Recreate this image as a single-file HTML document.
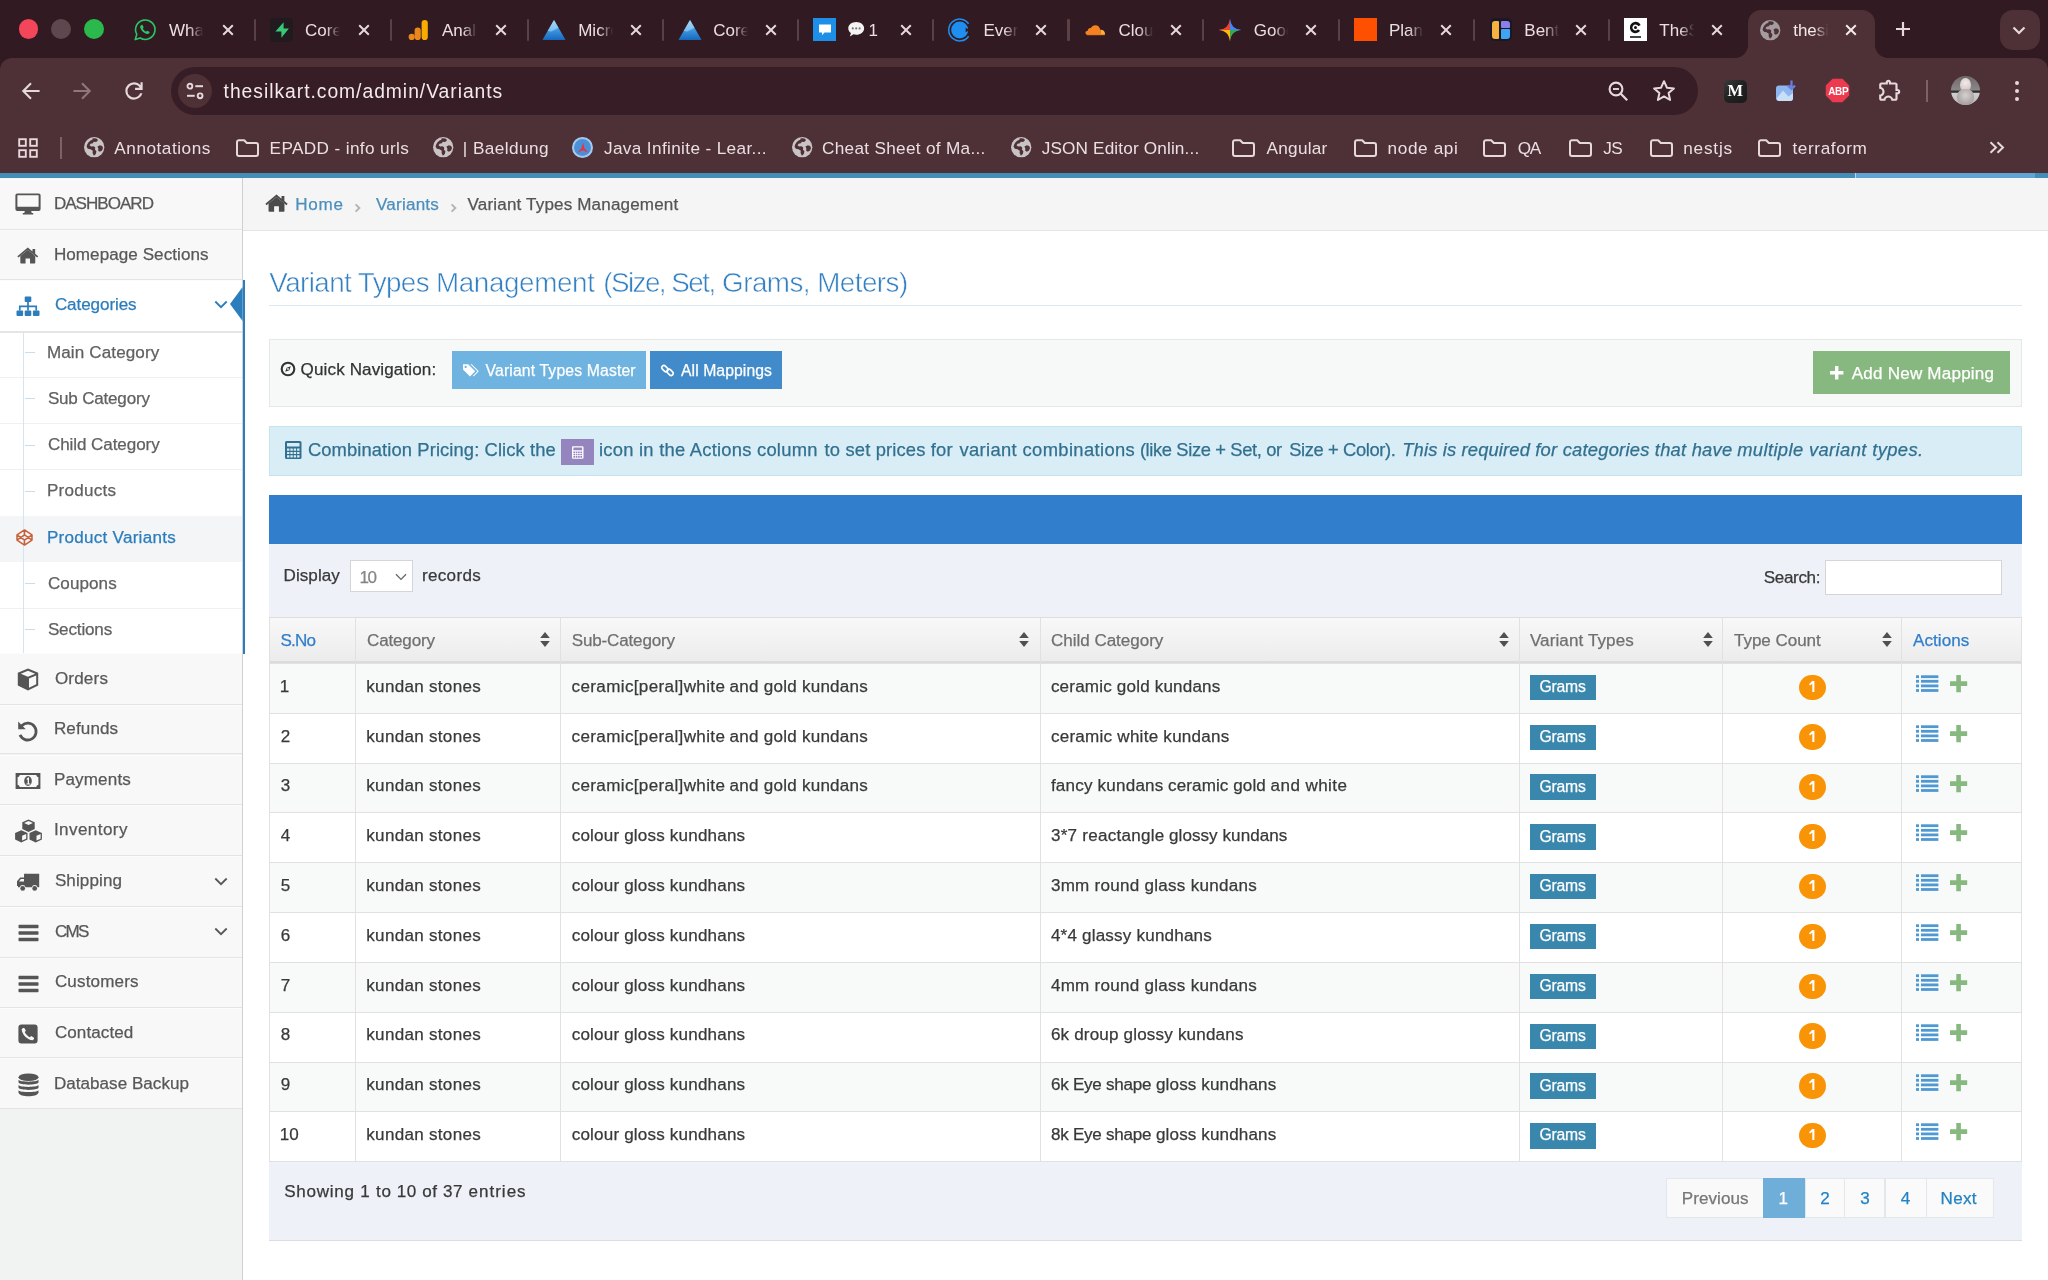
<!DOCTYPE html>
<html lang="en"><head><meta charset="utf-8"><title>thesilkart.com/admin/Variants</title>
<style>
html,body{margin:0;padding:0;}
body{width:2048px;height:1280px;overflow:hidden;position:relative;background:#fff;font-family:"Liberation Sans", sans-serif;}
div,span.t,svg{position:absolute;box-sizing:border-box;}
span.t{white-space:pre;}
#page,#browser-chrome{will-change:transform;}
#page span.t{-webkit-text-stroke:0.250px currentColor;}
svg{overflow:visible;}
</style></head>
<body>
<div id="page" style="left:0;top:0;width:2048px;height:1280px;"><div style="left:243.00px;top:178.00px;width:1805.00px;height:1102.00px;background:#FFFFFF"></div><div style="left:0.00px;top:173.00px;width:2048.00px;height:5.50px;background:#438EB9"></div><div style="left:1855.00px;top:173.00px;width:180.00px;height:5.50px;background:#5FA4D2;border-left:1px solid #B9D6EA"></div><div id="sidebar" style="left:0;top:0;width:0;height:0"><div style="left:0.00px;top:178.00px;width:243.00px;height:1102.00px;background:#F1F2F2;border-right:1px solid #D0D0D0"></div><div style="left:0.00px;top:178.50px;width:242.00px;height:51.10px;background:#F8F8F8;border-top:1px solid #FCFCFC;border-bottom:1px solid #E4E4E4"></div><svg style="left:15.20px;top:193.40px;" width="26.00" height="22.00" viewBox="0 0 26 22"><g fill="#555555"><path d="M2.300 .4 h21.400 a1.900 1.900 0 0 1 1.900 1.900 v13.800 a1.900 1.900 0 0 1-1.900 1.900 h-21.400 a1.900 1.900 0 0 1-1.900-1.900 v-13.800 a1.900 1.900 0 0 1 1.900-1.900z M2.400 2.300 v11.400 h21.200 v-11.400z" fill-rule="evenodd"/><path d="M9.800 18 h6.400 l.5 2 h1.500 v1.500 h-10.400 v-1.500 h1.500z"/></g></svg><span class="t" style="left:53.90px;top:195.00px;font-size:17.06px;line-height:17.06px;color:#585858;letter-spacing:-0.984px;">DASHBOARD</span><div style="left:0.00px;top:229.60px;width:242.00px;height:50.40px;background:#F8F8F8;border-top:1px solid #FCFCFC;border-bottom:1px solid #E4E4E4"></div><svg style="left:17.40px;top:246.60px;" width="21.60" height="18.00" viewBox="0 0 24 20"><g fill="#555555"><path d="M12 3.100 L3.700 10 v7.600 a.8.8 0 0 0 .8.8 h5 v-5.600 h5 v5.600 h5 a.8.8 0 0 0 .8-.8 V10 Z"/><path d="M12 .6 L.4 10.200 l1.200 1.400 L12 3 l10.400 8.600 1.200-1.400 -3.400-2.800 V2.200 h-3 v2.700 Z"/></g></svg><span class="t" style="left:53.90px;top:246.00px;font-size:17.06px;line-height:17.06px;color:#585858;letter-spacing:0.069px;">Homepage Sections</span><div style="left:0.00px;top:280.00px;width:242.00px;height:51.60px;background:#FFFFFF;border-top:1px solid #FCFCFC;border-bottom:1px solid #E4E4E4"></div><svg style="left:16.20px;top:295.70px;" width="24.00" height="21.00" viewBox="0 0 24 21"><g fill="#2B7DBC"><rect x="8.700" y=".5" width="6.600" height="5.600" rx="1"/><rect x=".5" y="14.500" width="6.600" height="5.600" rx="1"/><rect x="8.700" y="14.500" width="6.600" height="5.600" rx="1"/><rect x="16.900" y="14.500" width="6.600" height="5.600" rx="1"/><path d="M12 6 V14.500 M3.800 14.500 V10.300 H20.200 V14.500" fill="none" stroke="#2B7DBC" stroke-width="1.700"/></g></svg><span class="t" style="left:54.90px;top:296.00px;font-size:17.06px;line-height:17.06px;color:#2B7DBC;letter-spacing:-0.079px;">Categories</span><div style="left:0.00px;top:653.40px;width:242.00px;height:51.30px;background:#F8F8F8;border-top:1px solid #FCFCFC;border-bottom:1px solid #E4E4E4"></div><svg style="left:17.20px;top:668.20px;" width="22.00" height="23.00" viewBox="0 0 22 23"><g fill="#555555"><path d="M11 .6 L21.200 4.800 V17.600 L11 22.400 L.8 17.600 V4.800 Z M11 2.800 L3.800 5.700 L11 8.700 L18.200 5.700 Z M12 10.500 V19.700 L19.200 16.300 V7.500 Z" fill-rule="evenodd"/></g></svg><span class="t" style="left:54.90px;top:670.00px;font-size:17.06px;line-height:17.06px;color:#585858;letter-spacing:0.185px;">Orders</span><div style="left:0.00px;top:704.70px;width:242.00px;height:49.80px;background:#F8F8F8;border-top:1px solid #FCFCFC;border-bottom:1px solid #E4E4E4"></div><svg style="left:17.20px;top:719.50px;" width="22.00" height="22.00" viewBox="0 0 22 22"><g fill="#555555"><path d="M1.200 1.600 L1.200 9.200 H8.800 L6 6.400 A7 7 0 1 1 4.300 14.300 L1.700 15.500 A9.800 9.800 0 1 0 4 4.400 Z"/></g></svg><span class="t" style="left:53.90px;top:720.00px;font-size:17.06px;line-height:17.06px;color:#585858;letter-spacing:0.122px;">Refunds</span><div style="left:0.00px;top:754.50px;width:242.00px;height:50.80px;background:#F8F8F8;border-top:1px solid #FCFCFC;border-bottom:1px solid #E4E4E4"></div><svg style="left:15.20px;top:771.90px;" width="26.00" height="18.00" viewBox="0 0 26 18"><g fill="#555555"><path d="M.6 1 H25.400 V17 H.6 Z M4.800 3 A3 3 0 0 1 2.600 5.200 V12.800 A3 3 0 0 1 4.800 15 H21.200 A3 3 0 0 1 23.400 12.800 V5.200 A3 3 0 0 1 21.200 3 Z" fill-rule="evenodd"/><path d="M13 4 a3.800 5 0 1 0 .01 0z M11.600 6.800 l1.400-1.200 h1 v5.800 h1.200 v1.200 h-3.800 v-1.200 h1.300 v-3.800 l-.7.5z" fill-rule="evenodd"/></g></svg><span class="t" style="left:53.90px;top:771.00px;font-size:17.06px;line-height:17.06px;color:#585858;letter-spacing:0.161px;">Payments</span><div style="left:0.00px;top:805.30px;width:242.00px;height:51.10px;background:#F8F8F8;border-top:1px solid #FCFCFC;border-bottom:1px solid #E4E4E4"></div><svg style="left:13.70px;top:819.30px;" width="29.00" height="24.00" viewBox="0 0 29 24"><g fill="#555555"><path d="M14.500 .6 L20.700 3.300 V10 L14.500 12.900 L8.300 10 V3.300 Z M14.500 2.100 L10.100 4 L14.500 5.900 L18.900 4 Z" fill-rule="evenodd"/><path d="M7.300 11.200 L13.500 13.900 V20.600 L7.300 23.500 L1.100 20.600 V13.900 Z M8.100 16.700 V21.600 L12.200 19.700 V14.900 Z" fill-rule="evenodd"/><path d="M21.700 11.200 L27.900 13.900 V20.600 L21.700 23.500 L15.500 20.600 V13.900 Z M22.500 16.700 V21.600 L26.600 19.700 V14.900 Z" fill-rule="evenodd"/></g></svg><span class="t" style="left:53.90px;top:821.00px;font-size:17.06px;line-height:17.06px;color:#585858;letter-spacing:0.426px;">Inventory</span><div style="left:0.00px;top:856.40px;width:242.00px;height:50.60px;background:#F8F8F8;border-top:1px solid #FCFCFC;border-bottom:1px solid #E4E4E4"></div><svg style="left:16.20px;top:872.50px;" width="24.00" height="19.00" viewBox="0 0 24 19"><g fill="#555555"><path d="M9.800 .8 H23.200 V14.200 H21.600 A3 3 0 0 0 15.800 14.200 H9.600 A3 3 0 0 0 3.800 14.200 H2 V13 H1 V8.300 L4.200 4.400 H8 V2 A1.200 1.200 0 0 1 9.800 .8 Z M3 8.600 H8 V5.900 H4.900 Z" fill-rule="evenodd"/><circle cx="6.700" cy="15.400" r="2.400"/><circle cx="18.700" cy="15.400" r="2.400"/></g></svg><span class="t" style="left:54.90px;top:872.00px;font-size:17.06px;line-height:17.06px;color:#585858;letter-spacing:0.105px;">Shipping</span><div style="left:0.00px;top:907.00px;width:242.00px;height:50.50px;background:#F8F8F8;border-top:1px solid #FCFCFC;border-bottom:1px solid #E4E4E4"></div><svg style="left:17.70px;top:924.10px;" width="21.00" height="18.00" viewBox="0 0 21 18"><g fill="#555555"><rect x=".5" y=".8" width="20" height="3.400" rx=".7"/><rect x=".5" y="7.300" width="20" height="3.400" rx=".7"/><rect x=".5" y="13.800" width="20" height="3.400" rx=".7"/></g></svg><span class="t" style="left:54.90px;top:923.00px;font-size:17.06px;line-height:17.06px;color:#585858;letter-spacing:-1.755px;">CMS</span><div style="left:0.00px;top:957.50px;width:242.00px;height:50.50px;background:#F8F8F8;border-top:1px solid #FCFCFC;border-bottom:1px solid #E4E4E4"></div><svg style="left:17.70px;top:974.50px;" width="21.00" height="18.00" viewBox="0 0 21 18"><g fill="#555555"><rect x=".5" y=".8" width="20" height="3.400" rx=".7"/><rect x=".5" y="7.300" width="20" height="3.400" rx=".7"/><rect x=".5" y="13.800" width="20" height="3.400" rx=".7"/></g></svg><span class="t" style="left:54.90px;top:973.00px;font-size:17.06px;line-height:17.06px;color:#585858;letter-spacing:0.164px;">Customers</span><div style="left:0.00px;top:1008.00px;width:242.00px;height:50.30px;background:#F8F8F8;border-top:1px solid #FCFCFC;border-bottom:1px solid #E4E4E4"></div><svg style="left:18.20px;top:1023.90px;" width="20.00" height="20.00" viewBox="0 0 20 20"><g fill="#555555"><path d="M3.400 .4 H16.600 A3 3 0 0 1 19.600 3.400 V16.600 A3 3 0 0 1 16.600 19.600 H3.400 A3 3 0 0 1 .4 16.600 V3.400 A3 3 0 0 1 3.400 .4 Z M5 4 L3.700 5.300 C3.700 10.300 9.700 16.300 14.700 16.300 L16 15 V13.700 L13.200 12.100 L11.900 13.300 C10.100 12.700 7.300 9.900 6.700 8.100 L7.900 6.800 L6.300 4 Z" fill-rule="evenodd"/></g></svg><span class="t" style="left:54.90px;top:1024.00px;font-size:17.06px;line-height:17.06px;color:#585858;letter-spacing:0.084px;">Contacted</span><div style="left:0.00px;top:1058.30px;width:242.00px;height:50.70px;background:#F8F8F8;border-top:1px solid #FCFCFC;border-bottom:1px solid #E4E4E4"></div><svg style="left:17.70px;top:1072.70px;" width="21.00" height="24.00" viewBox="0 0 21 24"><g fill="#555555"><ellipse cx="10.500" cy="4.200" rx="10" ry="3.800"/><path d="M.5 6.800 C2 9.300 19 9.300 20.500 6.800 V9.600 C19 12.400 2 12.400 .5 9.600 Z"/><path d="M.5 12 C2 14.500 19 14.500 20.500 12 V14.800 C19 17.600 2 17.600 .5 14.800 Z"/><path d="M.5 17.200 C2 19.700 19 19.700 20.500 17.200 V19.800 C19 24.500 2 24.500 .5 19.800 Z"/></g></svg><span class="t" style="left:53.90px;top:1075.00px;font-size:17.06px;line-height:17.06px;color:#585858;letter-spacing:0.037px;">Database Backup</span><svg style="left:213.60px;top:299.90px;" width="14.00" height="9.00" viewBox="0 0 14 9"><path d="M1.300 1.500 L7 7.200 L12.700 1.500" fill="none" stroke="#2B7DBC" stroke-width="1.800"/></svg><svg style="left:213.60px;top:876.70px;" width="14.00" height="9.00" viewBox="0 0 14 9"><path d="M1.300 1.500 L7 7.200 L12.700 1.500" fill="none" stroke="#585858" stroke-width="1.800"/></svg><svg style="left:213.60px;top:927.30px;" width="14.00" height="9.00" viewBox="0 0 14 9"><path d="M1.300 1.500 L7 7.200 L12.700 1.500" fill="none" stroke="#585858" stroke-width="1.800"/></svg><div style="left:0.00px;top:331.60px;width:242.00px;height:321.80px;background:#FFFFFF;border-top:1px solid #E5E5E5"></div><div style="left:25.40px;top:352.10px;width:9.60px;height:1.00px;background:#C9DDEE"></div><span class="t" style="left:46.90px;top:344.00px;font-size:17.06px;line-height:17.06px;color:#616161;letter-spacing:0.131px;">Main Category</span><div style="left:0.00px;top:376.80px;width:242.00px;height:1.00px;background:#F0F0F0"></div><div style="left:25.40px;top:398.30px;width:9.60px;height:1.00px;background:#C9DDEE"></div><span class="t" style="left:47.90px;top:390.00px;font-size:17.06px;line-height:17.06px;color:#616161;letter-spacing:-0.201px;">Sub Category</span><div style="left:0.00px;top:423.00px;width:242.00px;height:1.00px;background:#F0F0F0"></div><div style="left:25.40px;top:444.50px;width:9.60px;height:1.00px;background:#C9DDEE"></div><span class="t" style="left:47.90px;top:436.00px;font-size:17.06px;line-height:17.06px;color:#616161;letter-spacing:-0.071px;">Child Category</span><div style="left:0.00px;top:469.20px;width:242.00px;height:1.00px;background:#F0F0F0"></div><div style="left:25.40px;top:490.70px;width:9.60px;height:1.00px;background:#C9DDEE"></div><span class="t" style="left:46.90px;top:482.00px;font-size:17.06px;line-height:17.06px;color:#616161;letter-spacing:0.279px;">Products</span><div style="left:0.00px;top:515.80px;width:242.00px;height:46.40px;background:#F4F5F6;"></div><span class="t" style="left:46.90px;top:529.00px;font-size:17.06px;line-height:17.06px;color:#2B7DBC;letter-spacing:0.271px;">Product Variants</span><div style="left:25.40px;top:583.10px;width:9.60px;height:1.00px;background:#C9DDEE"></div><span class="t" style="left:47.90px;top:575.00px;font-size:17.06px;line-height:17.06px;color:#616161;letter-spacing:0.098px;">Coupons</span><div style="left:0.00px;top:607.80px;width:242.00px;height:1.00px;background:#F0F0F0"></div><div style="left:25.40px;top:629.30px;width:9.60px;height:1.00px;background:#C9DDEE"></div><span class="t" style="left:47.90px;top:621.00px;font-size:17.06px;line-height:17.06px;color:#616161;letter-spacing:-0.151px;">Sections</span><div style="left:22.90px;top:332.00px;width:1.40px;height:321.00px;background:#D3E5F2"></div><svg style="left:15.90px;top:528.70px;" width="17.00" height="17.00" viewBox="0 0 17 17"><path d="M8.500 .9 L16 5.900 V11.100 L8.500 16.100 L1 11.100 V5.900 Z M1 5.900 L8.500 11.100 L16 5.900 M1 11.100 L8.500 5.900 L16 11.100 M8.500 .9 V5.900 M8.500 11.100 V16.100" fill="none" stroke="#C86139" stroke-width="1.500" stroke-linejoin="round"/></svg><div style="left:243.00px;top:279.60px;width:2.40px;height:374.00px;background:#2B7DBC"></div><svg style="left:230.30px;top:286.80px;" width="12.60" height="34.00" viewBox="0 0 12.6 34"><path d="M12.600 0 V34 L0 17 Z" fill="#2B7DBC"/></svg></div><div id="breadcrumbs" style="left:0;top:0;width:0;height:0"><div style="left:243.00px;top:178.00px;width:1805.00px;height:52.80px;background:#F5F5F5;border-bottom:1px solid #E5E5E5"></div><svg style="left:265.38px;top:194.00px;" width="23.04" height="19.20" viewBox="0 0 24 20"><g fill="#4B4B4B"><path d="M12 3.100 L3.700 10 v7.600 a.8.8 0 0 0 .8.8 h5 v-5.600 h5 v5.600 h5 a.8.8 0 0 0 .8-.8 V10 Z"/><path d="M12 .6 L.4 10.200 l1.200 1.400 L12 3 l10.400 8.600 1.200-1.400 -3.400-2.800 V2.200 h-3 v2.700 Z"/></g></svg><span class="t" style="left:295.20px;top:196.00px;font-size:17.06px;line-height:17.06px;color:#4C8FBD;letter-spacing:0.736px;">Home</span><svg style="left:354.40px;top:201.50px;" width="7.00" height="12.00" viewBox="0 0 7 12"><path d="M1.600 2.400 L5.400 6 L1.600 9.600" fill="none" stroke="#B3B3B3" stroke-width="1.900"/></svg><span class="t" style="left:376.00px;top:196.00px;font-size:17.06px;line-height:17.06px;color:#4C8FBD;letter-spacing:0.222px;">Variants</span><svg style="left:450.10px;top:201.50px;" width="7.00" height="12.00" viewBox="0 0 7 12"><path d="M1.600 2.400 L5.400 6 L1.600 9.600" fill="none" stroke="#B3B3B3" stroke-width="1.900"/></svg><span class="t" style="left:467.60px;top:196.00px;font-size:17.06px;line-height:17.06px;color:#555555;letter-spacing:0.162px;">Variant Types Management</span></div><div id="page-content" style="left:0;top:0;width:0;height:0"><span class="t" style="left:269.30px;top:269.00px;font-size:27.8px;line-height:27.8px;color:#3380C2;letter-spacing:-0.591px;-webkit-text-stroke:0.550px #FFFFFF;">Variant Types</span><span class="t" style="left:435.90px;top:269.00px;font-size:27.8px;line-height:27.8px;color:#3380C2;letter-spacing:-0.358px;-webkit-text-stroke:0.550px #FFFFFF;">Management</span><span class="t" style="left:603.20px;top:269.00px;font-size:27.8px;line-height:27.8px;color:#3380C2;letter-spacing:-1.530px;-webkit-text-stroke:0.550px #FFFFFF;">(Size, Set,</span><span class="t" style="left:722.10px;top:269.00px;font-size:27.8px;line-height:27.8px;color:#3380C2;letter-spacing:-0.538px;-webkit-text-stroke:0.550px #FFFFFF;">Grams, Meters)</span><div style="left:269.00px;top:304.80px;width:1753.00px;height:1.20px;background:#DCE8F3"></div><div style="left:268.80px;top:339.20px;width:1753.40px;height:67.60px;background:#F7F9F9;border:1px solid #E6E8E8"></div><svg style="left:280.20px;top:361.20px;" width="16.00" height="16.00" viewBox="0 0 16 16"><circle cx="8" cy="8" r="6.300" fill="none" stroke="#333" stroke-width="2.100"/><path d="M10.800 5.200 L9.300 9.300 L5.200 10.800 L6.700 6.700 Z" fill="#333"/><circle cx="8" cy="8" r=".9" fill="#F7F9F9"/></svg><span class="t" style="left:300.60px;top:361.00px;font-size:17.06px;line-height:17.06px;color:#333333;letter-spacing:0.121px;">Quick Navigation:</span><div style="left:452.20px;top:351.40px;width:193.50px;height:37.20px;background:#6FB3E0"></div><svg style="left:461.60px;top:362.70px;" width="18.00" height="15.00" viewBox="0 0 18 15"><path d="M1 1.200 H6.200 L13.200 8.200 L8 13.400 L1 6.400 Z M3.600 2.800 a1.100 1.100 0 1 0 .01 0z" fill="#fff" fill-rule="evenodd"/><path d="M8.400 1.200 H9.800 L16.800 8.200 L11.600 13.400 L10.900 12.700 L15.400 8.200 Z" fill="#fff"/></svg><span class="t" style="left:485.50px;top:363.00px;font-size:15.74px;line-height:15.74px;color:#FFFFFF;letter-spacing:0.150px;">Variant Types Master</span><div style="left:650.00px;top:351.40px;width:131.90px;height:37.20px;background:#428BCA"></div><svg style="left:659.50px;top:362.90px;" width="15.00" height="15.00" viewBox="0 0 15 15"><g fill="none" stroke="#fff" stroke-width="1.600"><rect x="1.400" y="3.500" width="7" height="4.200" rx="2.100" transform="rotate(45 4.900 5.600)"/><rect x="6.600" y="7.300" width="7" height="4.200" rx="2.100" transform="rotate(45 10.100 9.400)"/></g></svg><span class="t" style="left:681.00px;top:363.00px;font-size:15.74px;line-height:15.74px;color:#FFFFFF;letter-spacing:0.081px;">All Mappings</span><div style="left:1813.30px;top:351.40px;width:196.80px;height:43.00px;background:#87B87F"></div><svg style="left:1830.00px;top:365.90px;" width="13.40" height="13.40" viewBox="0 0 13.4 13.4"><path d="M5 0 H8.400 V5 H13.400 V8.400 H8.400 V13.400 H5 V8.400 H0 V5 H5 Z" fill="#fff"/></svg><span class="t" style="left:1851.80px;top:365.00px;font-size:17.06px;line-height:17.06px;color:#FFFFFF;letter-spacing:0.206px;">Add New Mapping</span><div style="left:268.80px;top:425.70px;width:1753.40px;height:50.00px;background:#D9EDF7;border:1px solid #C4E4F0"></div><svg style="left:284.85px;top:441.10px;" width="16.50" height="18.00" viewBox="0 0 16.5 18"><path d="M1.500 0 H15 A1.500 1.500 0 0 1 16.500 1.500 V16.500 A1.500 1.500 0 0 1 15 18 H1.500 A1.500 1.500 0 0 1 0 16.500 V1.500 A1.500 1.500 0 0 1 1.500 0 Z M2 2 V5.600 H14.500 V2 Z M2 7.5 h2.400 v2.200 h-2.400 Z M2 10.9 h2.400 v2.200 h-2.400 Z M2 14.2 h2.400 v2.200 h-2.400 Z M5.35 7.5 h2.400 v2.200 h-2.400 Z M5.35 10.9 h2.400 v2.200 h-2.400 Z M5.35 14.2 h2.400 v2.200 h-2.400 Z M8.7 7.5 h2.400 v2.200 h-2.400 Z M8.7 10.9 h2.400 v2.200 h-2.400 Z M8.7 14.2 h2.400 v2.200 h-2.400 Z M12.1 7.5 h2.400 v2.200 h-2.400 Z M12.1 10.9 h2.400 v2.200 h-2.400 Z M12.1 14.2 h2.400 v2.200 h-2.400 Z " fill="#31708F" fill-rule="evenodd"/></svg><span class="t" style="left:307.90px;top:441.00px;font-size:18.37px;line-height:18.37px;color:#31708F;letter-spacing:0.104px;">Combination Pricing: Click the</span><div style="left:561.00px;top:439.40px;width:33.40px;height:25.30px;background:#9585BF"></div><svg style="left:571.95px;top:445.70px;" width="11.50" height="13.00" viewBox="0 0 16.5 18"><path d="M1.500 0 H15 A1.500 1.500 0 0 1 16.500 1.500 V16.500 A1.500 1.500 0 0 1 15 18 H1.500 A1.500 1.500 0 0 1 0 16.500 V1.500 A1.500 1.500 0 0 1 1.500 0 Z M2 2 V5.600 H14.500 V2 Z M2 7.5 h2.400 v2.200 h-2.400 Z M2 10.9 h2.400 v2.200 h-2.400 Z M2 14.2 h2.400 v2.200 h-2.400 Z M5.35 7.5 h2.400 v2.200 h-2.400 Z M5.35 10.9 h2.400 v2.200 h-2.400 Z M5.35 14.2 h2.400 v2.200 h-2.400 Z M8.7 7.5 h2.400 v2.200 h-2.400 Z M8.7 10.9 h2.400 v2.200 h-2.400 Z M8.7 14.2 h2.400 v2.200 h-2.400 Z M12.1 7.5 h2.400 v2.200 h-2.400 Z M12.1 10.9 h2.400 v2.200 h-2.400 Z M12.1 14.2 h2.400 v2.200 h-2.400 Z " fill="#FFFFFF" fill-rule="evenodd"/></svg><span class="t" style="left:599.00px;top:441.00px;font-size:18.37px;line-height:18.37px;color:#31708F;letter-spacing:0.245px;">icon in the Actions column</span><span class="t" style="left:824.60px;top:441.00px;font-size:18.37px;line-height:18.37px;color:#31708F;letter-spacing:0.151px;">to set prices for</span><span class="t" style="left:959.40px;top:441.00px;font-size:18.37px;line-height:18.37px;color:#31708F;letter-spacing:0.368px;">variant combinations</span><span class="t" style="left:1139.90px;top:441.00px;font-size:18.37px;line-height:18.37px;color:#31708F;letter-spacing:-0.383px;">(like Size + Set, or</span><span class="t" style="left:1289.20px;top:441.00px;font-size:18.37px;line-height:18.37px;color:#31708F;letter-spacing:-0.394px;">Size + Color).</span><span class="t" style="left:1402.20px;top:441.00px;font-size:18.37px;line-height:18.37px;color:#31708F;letter-spacing:0.147px;font-style:italic;">This is required for</span><span class="t" style="left:1562.70px;top:441.00px;font-size:18.37px;line-height:18.37px;color:#31708F;letter-spacing:0.214px;font-style:italic;">categories that have</span><span class="t" style="left:1737.20px;top:441.00px;font-size:18.37px;line-height:18.37px;color:#31708F;letter-spacing:0.380px;font-style:italic;">multiple variant types.</span></div><div id="variants-table" style="left:0;top:0;width:0;height:0"><div style="left:269.00px;top:494.80px;width:1753.00px;height:49.40px;background:#307ECC"></div><div style="left:269.00px;top:544.00px;width:1753.00px;height:73.60px;background:#EEF1F8"></div><span class="t" style="left:283.50px;top:567.00px;font-size:17.06px;line-height:17.06px;color:#393939;letter-spacing:0.072px;">Display</span><div style="left:350.00px;top:560.20px;width:63.20px;height:32.20px;background:#fff;border:1px solid #D5D5D5"></div><span class="t" style="left:359.40px;top:569.00px;font-size:17.06px;line-height:17.06px;color:#858585;letter-spacing:-1.281px;">10</span><svg style="left:395.30px;top:572.60px;" width="12.00" height="8.00" viewBox="0 0 12 8"><path d="M1 1.200 L6 6.400 L11 1.200" fill="none" stroke="#666" stroke-width="1.300"/></svg><span class="t" style="left:421.90px;top:567.00px;font-size:17.06px;line-height:17.06px;color:#393939;letter-spacing:0.347px;">records</span><span class="t" style="left:1763.70px;top:569.00px;font-size:17.06px;line-height:17.06px;color:#393939;letter-spacing:-0.319px;">Search:</span><div style="left:1825.00px;top:560.00px;width:176.80px;height:35.00px;background:#fff;border:1px solid #D5D5D5"></div><div style="left:269.00px;top:617.20px;width:1753.00px;height:46.20px;background:linear-gradient(#F8F8F8,#ECECEC);border-top:1px solid #DDDDDD;border-bottom:2px solid #DBDBDB"></div><span class="t" style="left:280.40px;top:632.00px;font-size:17.06px;line-height:17.06px;color:#307ECC;letter-spacing:-0.806px;">S.No</span><span class="t" style="left:367.00px;top:632.00px;font-size:17.06px;line-height:17.06px;color:#707070;letter-spacing:-0.164px;">Category</span><svg style="left:540.00px;top:631.50px;" width="10.00" height="15.00" viewBox="0 0 10 15"><path d="M5 0 L9.800 5.900 H.2 Z M.2 9.100 H9.800 L5 15 Z" fill="#505050"/></svg><span class="t" style="left:571.70px;top:632.00px;font-size:17.06px;line-height:17.06px;color:#707070;letter-spacing:-0.160px;">Sub-Category</span><svg style="left:1019.40px;top:631.50px;" width="10.00" height="15.00" viewBox="0 0 10 15"><path d="M5 0 L9.800 5.900 H.2 Z M.2 9.100 H9.800 L5 15 Z" fill="#505050"/></svg><span class="t" style="left:1051.00px;top:632.00px;font-size:17.06px;line-height:17.06px;color:#707070;letter-spacing:-0.033px;">Child Category</span><svg style="left:1498.80px;top:631.50px;" width="10.00" height="15.00" viewBox="0 0 10 15"><path d="M5 0 L9.800 5.900 H.2 Z M.2 9.100 H9.800 L5 15 Z" fill="#505050"/></svg><span class="t" style="left:1529.90px;top:632.00px;font-size:17.06px;line-height:17.06px;color:#707070;letter-spacing:0.105px;">Variant Types</span><svg style="left:1702.60px;top:631.50px;" width="10.00" height="15.00" viewBox="0 0 10 15"><path d="M5 0 L9.800 5.900 H.2 Z M.2 9.100 H9.800 L5 15 Z" fill="#505050"/></svg><span class="t" style="left:1734.00px;top:632.00px;font-size:17.06px;line-height:17.06px;color:#707070;letter-spacing:-0.049px;">Type Count</span><svg style="left:1881.70px;top:631.50px;" width="10.00" height="15.00" viewBox="0 0 10 15"><path d="M5 0 L9.800 5.900 H.2 Z M.2 9.100 H9.800 L5 15 Z" fill="#505050"/></svg><span class="t" style="left:1913.00px;top:632.00px;font-size:17.06px;line-height:17.06px;color:#307ECC;letter-spacing:0.070px;">Actions</span><div style="left:269.00px;top:663.00px;width:1753.00px;height:50.02px;background:#F8F9F9;border-top:1px solid #E1E1E1"></div><span class="t" style="left:279.70px;top:678.00px;font-size:17.06px;line-height:17.06px;color:#393939;letter-spacing:0.000px;">1</span><span class="t" style="left:366.30px;top:678.00px;font-size:17.06px;line-height:17.06px;color:#393939;letter-spacing:0.295px;">kundan stones</span><span class="t" style="left:571.60px;top:678.00px;font-size:17.06px;line-height:17.06px;color:#393939;letter-spacing:0.357px;">ceramic[peral]white</span><span class="t" style="left:729.50px;top:678.00px;font-size:17.06px;line-height:17.06px;color:#393939;letter-spacing:0.249px;">and gold kundans</span><span class="t" style="left:1050.90px;top:678.00px;font-size:17.06px;line-height:17.06px;color:#393939;letter-spacing:0.189px;">ceramic gold kundans</span><div style="left:1529.80px;top:674.80px;width:66.00px;height:25.40px;background:#3A87AD"></div><span class="t" style="left:1539.60px;top:679.00px;font-size:15.74px;line-height:15.74px;color:#FFFFFF;letter-spacing:-0.234px;">Grams</span><div style="left:1799.10px;top:674.60px;width:26.80px;height:25.40px;background:#F89406;border-radius:13px"></div><svg style="left:1809.30px;top:680.90px;" width="5.40" height="11.00" viewBox="0 0 5.4 11"><path d="M3.200 0 H5.400 V11 H3.300 V2.700 L1 4.600 L0 3.300 Z" fill="#fff"/></svg><svg style="left:1916.00px;top:675.00px;" width="22.40" height="17.20" viewBox="0 0 22.4 17.2"><rect x="0" y="0.3" width="3" height="2.800" fill="#4F99D3"/><rect x="5" y="0.3" width="17.400" height="2.800" fill="#4F99D3"/><rect x="0" y="4.9" width="3" height="2.800" fill="#4F99D3"/><rect x="5" y="4.9" width="17.400" height="2.800" fill="#4F99D3"/><rect x="0" y="9.5" width="3" height="2.800" fill="#4F99D3"/><rect x="5" y="9.5" width="17.400" height="2.800" fill="#4F99D3"/><rect x="0" y="14.1" width="3" height="2.800" fill="#4F99D3"/><rect x="5" y="14.1" width="17.400" height="2.800" fill="#4F99D3"/></svg><svg style="left:1950.00px;top:675.00px;" width="17.20" height="17.20" viewBox="0 0 17.2 17.2"><path d="M6.300 0 H10.900 V6.300 H17.200 V10.900 H10.900 V17.200 H6.300 V10.900 H0 V6.300 H6.300 Z" fill="#87B87F"/></svg><div style="left:269.00px;top:712.82px;width:1753.00px;height:50.02px;background:#FFFFFF;border-top:1px solid #E1E1E1"></div><span class="t" style="left:280.70px;top:728.00px;font-size:17.06px;line-height:17.06px;color:#393939;letter-spacing:0.000px;">2</span><span class="t" style="left:366.30px;top:728.00px;font-size:17.06px;line-height:17.06px;color:#393939;letter-spacing:0.295px;">kundan stones</span><span class="t" style="left:571.60px;top:728.00px;font-size:17.06px;line-height:17.06px;color:#393939;letter-spacing:0.357px;">ceramic[peral]white</span><span class="t" style="left:729.50px;top:728.00px;font-size:17.06px;line-height:17.06px;color:#393939;letter-spacing:0.249px;">and gold kundans</span><span class="t" style="left:1050.90px;top:728.00px;font-size:17.06px;line-height:17.06px;color:#393939;letter-spacing:0.252px;">ceramic white kundans</span><div style="left:1529.80px;top:724.62px;width:66.00px;height:25.40px;background:#3A87AD"></div><span class="t" style="left:1539.60px;top:729.00px;font-size:15.74px;line-height:15.74px;color:#FFFFFF;letter-spacing:-0.234px;">Grams</span><div style="left:1799.10px;top:724.42px;width:26.80px;height:25.40px;background:#F89406;border-radius:13px"></div><svg style="left:1809.30px;top:730.72px;" width="5.40" height="11.00" viewBox="0 0 5.4 11"><path d="M3.200 0 H5.400 V11 H3.300 V2.700 L1 4.600 L0 3.300 Z" fill="#fff"/></svg><svg style="left:1916.00px;top:724.82px;" width="22.40" height="17.20" viewBox="0 0 22.4 17.2"><rect x="0" y="0.3" width="3" height="2.800" fill="#4F99D3"/><rect x="5" y="0.3" width="17.400" height="2.800" fill="#4F99D3"/><rect x="0" y="4.9" width="3" height="2.800" fill="#4F99D3"/><rect x="5" y="4.9" width="17.400" height="2.800" fill="#4F99D3"/><rect x="0" y="9.5" width="3" height="2.800" fill="#4F99D3"/><rect x="5" y="9.5" width="17.400" height="2.800" fill="#4F99D3"/><rect x="0" y="14.1" width="3" height="2.800" fill="#4F99D3"/><rect x="5" y="14.1" width="17.400" height="2.800" fill="#4F99D3"/></svg><svg style="left:1950.00px;top:724.82px;" width="17.20" height="17.20" viewBox="0 0 17.2 17.2"><path d="M6.300 0 H10.900 V6.300 H17.200 V10.900 H10.900 V17.200 H6.300 V10.900 H0 V6.300 H6.300 Z" fill="#87B87F"/></svg><div style="left:269.00px;top:762.64px;width:1753.00px;height:50.02px;background:#F8F9F9;border-top:1px solid #E1E1E1"></div><span class="t" style="left:280.70px;top:777.00px;font-size:17.06px;line-height:17.06px;color:#393939;letter-spacing:0.000px;">3</span><span class="t" style="left:366.30px;top:777.00px;font-size:17.06px;line-height:17.06px;color:#393939;letter-spacing:0.295px;">kundan stones</span><span class="t" style="left:571.60px;top:777.00px;font-size:17.06px;line-height:17.06px;color:#393939;letter-spacing:0.357px;">ceramic[peral]white</span><span class="t" style="left:729.50px;top:777.00px;font-size:17.06px;line-height:17.06px;color:#393939;letter-spacing:0.249px;">and gold kundans</span><span class="t" style="left:1050.90px;top:777.00px;font-size:17.06px;line-height:17.06px;color:#393939;letter-spacing:0.208px;">fancy kundans</span><span class="t" style="left:1168.10px;top:777.00px;font-size:17.06px;line-height:17.06px;color:#393939;letter-spacing:0.095px;">ceramic gold</span><span class="t" style="left:1270.60px;top:777.00px;font-size:17.06px;line-height:17.06px;color:#393939;letter-spacing:0.413px;">and white</span><div style="left:1529.80px;top:774.44px;width:66.00px;height:25.40px;background:#3A87AD"></div><span class="t" style="left:1539.60px;top:779.00px;font-size:15.74px;line-height:15.74px;color:#FFFFFF;letter-spacing:-0.234px;">Grams</span><div style="left:1799.10px;top:774.24px;width:26.80px;height:25.40px;background:#F89406;border-radius:13px"></div><svg style="left:1809.30px;top:780.54px;" width="5.40" height="11.00" viewBox="0 0 5.4 11"><path d="M3.200 0 H5.400 V11 H3.300 V2.700 L1 4.600 L0 3.300 Z" fill="#fff"/></svg><svg style="left:1916.00px;top:774.64px;" width="22.40" height="17.20" viewBox="0 0 22.4 17.2"><rect x="0" y="0.3" width="3" height="2.800" fill="#4F99D3"/><rect x="5" y="0.3" width="17.400" height="2.800" fill="#4F99D3"/><rect x="0" y="4.9" width="3" height="2.800" fill="#4F99D3"/><rect x="5" y="4.9" width="17.400" height="2.800" fill="#4F99D3"/><rect x="0" y="9.5" width="3" height="2.800" fill="#4F99D3"/><rect x="5" y="9.5" width="17.400" height="2.800" fill="#4F99D3"/><rect x="0" y="14.1" width="3" height="2.800" fill="#4F99D3"/><rect x="5" y="14.1" width="17.400" height="2.800" fill="#4F99D3"/></svg><svg style="left:1950.00px;top:774.64px;" width="17.20" height="17.20" viewBox="0 0 17.2 17.2"><path d="M6.300 0 H10.900 V6.300 H17.200 V10.900 H10.900 V17.200 H6.300 V10.900 H0 V6.300 H6.300 Z" fill="#87B87F"/></svg><div style="left:269.00px;top:812.46px;width:1753.00px;height:50.02px;background:#FFFFFF;border-top:1px solid #E1E1E1"></div><span class="t" style="left:280.70px;top:827.00px;font-size:17.06px;line-height:17.06px;color:#393939;letter-spacing:0.000px;">4</span><span class="t" style="left:366.30px;top:827.00px;font-size:17.06px;line-height:17.06px;color:#393939;letter-spacing:0.295px;">kundan stones</span><span class="t" style="left:571.70px;top:827.00px;font-size:17.06px;line-height:17.06px;color:#393939;letter-spacing:0.190px;">colour gloss kundhans</span><span class="t" style="left:1050.90px;top:827.00px;font-size:17.06px;line-height:17.06px;color:#393939;letter-spacing:0.265px;">3*7 reactangle</span><span class="t" style="left:1169.00px;top:827.00px;font-size:17.06px;line-height:17.06px;color:#393939;letter-spacing:0.063px;">glossy kundans</span><div style="left:1529.80px;top:824.26px;width:66.00px;height:25.40px;background:#3A87AD"></div><span class="t" style="left:1539.60px;top:829.00px;font-size:15.74px;line-height:15.74px;color:#FFFFFF;letter-spacing:-0.234px;">Grams</span><div style="left:1799.10px;top:824.06px;width:26.80px;height:25.40px;background:#F89406;border-radius:13px"></div><svg style="left:1809.30px;top:830.36px;" width="5.40" height="11.00" viewBox="0 0 5.4 11"><path d="M3.200 0 H5.400 V11 H3.300 V2.700 L1 4.600 L0 3.300 Z" fill="#fff"/></svg><svg style="left:1916.00px;top:824.46px;" width="22.40" height="17.20" viewBox="0 0 22.4 17.2"><rect x="0" y="0.3" width="3" height="2.800" fill="#4F99D3"/><rect x="5" y="0.3" width="17.400" height="2.800" fill="#4F99D3"/><rect x="0" y="4.9" width="3" height="2.800" fill="#4F99D3"/><rect x="5" y="4.9" width="17.400" height="2.800" fill="#4F99D3"/><rect x="0" y="9.5" width="3" height="2.800" fill="#4F99D3"/><rect x="5" y="9.5" width="17.400" height="2.800" fill="#4F99D3"/><rect x="0" y="14.1" width="3" height="2.800" fill="#4F99D3"/><rect x="5" y="14.1" width="17.400" height="2.800" fill="#4F99D3"/></svg><svg style="left:1950.00px;top:824.46px;" width="17.20" height="17.20" viewBox="0 0 17.2 17.2"><path d="M6.300 0 H10.900 V6.300 H17.200 V10.900 H10.900 V17.200 H6.300 V10.900 H0 V6.300 H6.300 Z" fill="#87B87F"/></svg><div style="left:269.00px;top:862.28px;width:1753.00px;height:50.02px;background:#F8F9F9;border-top:1px solid #E1E1E1"></div><span class="t" style="left:280.70px;top:877.00px;font-size:17.06px;line-height:17.06px;color:#393939;letter-spacing:0.000px;">5</span><span class="t" style="left:366.30px;top:877.00px;font-size:17.06px;line-height:17.06px;color:#393939;letter-spacing:0.295px;">kundan stones</span><span class="t" style="left:571.70px;top:877.00px;font-size:17.06px;line-height:17.06px;color:#393939;letter-spacing:0.190px;">colour gloss kundhans</span><span class="t" style="left:1050.90px;top:877.00px;font-size:17.06px;line-height:17.06px;color:#393939;letter-spacing:0.268px;">3mm round glass kundans</span><div style="left:1529.80px;top:874.08px;width:66.00px;height:25.40px;background:#3A87AD"></div><span class="t" style="left:1539.60px;top:878.00px;font-size:15.74px;line-height:15.74px;color:#FFFFFF;letter-spacing:-0.234px;">Grams</span><div style="left:1799.10px;top:873.88px;width:26.80px;height:25.40px;background:#F89406;border-radius:13px"></div><svg style="left:1809.30px;top:880.18px;" width="5.40" height="11.00" viewBox="0 0 5.4 11"><path d="M3.200 0 H5.400 V11 H3.300 V2.700 L1 4.600 L0 3.300 Z" fill="#fff"/></svg><svg style="left:1916.00px;top:874.28px;" width="22.40" height="17.20" viewBox="0 0 22.4 17.2"><rect x="0" y="0.3" width="3" height="2.800" fill="#4F99D3"/><rect x="5" y="0.3" width="17.400" height="2.800" fill="#4F99D3"/><rect x="0" y="4.9" width="3" height="2.800" fill="#4F99D3"/><rect x="5" y="4.9" width="17.400" height="2.800" fill="#4F99D3"/><rect x="0" y="9.5" width="3" height="2.800" fill="#4F99D3"/><rect x="5" y="9.5" width="17.400" height="2.800" fill="#4F99D3"/><rect x="0" y="14.1" width="3" height="2.800" fill="#4F99D3"/><rect x="5" y="14.1" width="17.400" height="2.800" fill="#4F99D3"/></svg><svg style="left:1950.00px;top:874.28px;" width="17.20" height="17.20" viewBox="0 0 17.2 17.2"><path d="M6.300 0 H10.900 V6.300 H17.200 V10.900 H10.900 V17.200 H6.300 V10.900 H0 V6.300 H6.300 Z" fill="#87B87F"/></svg><div style="left:269.00px;top:912.10px;width:1753.00px;height:50.02px;background:#FFFFFF;border-top:1px solid #E1E1E1"></div><span class="t" style="left:280.70px;top:927.00px;font-size:17.06px;line-height:17.06px;color:#393939;letter-spacing:0.000px;">6</span><span class="t" style="left:366.30px;top:927.00px;font-size:17.06px;line-height:17.06px;color:#393939;letter-spacing:0.295px;">kundan stones</span><span class="t" style="left:571.70px;top:927.00px;font-size:17.06px;line-height:17.06px;color:#393939;letter-spacing:0.190px;">colour gloss kundhans</span><span class="t" style="left:1050.90px;top:927.00px;font-size:17.06px;line-height:17.06px;color:#393939;letter-spacing:0.200px;">4*4 glassy kundhans</span><div style="left:1529.80px;top:923.90px;width:66.00px;height:25.40px;background:#3A87AD"></div><span class="t" style="left:1539.60px;top:928.00px;font-size:15.74px;line-height:15.74px;color:#FFFFFF;letter-spacing:-0.234px;">Grams</span><div style="left:1799.10px;top:923.70px;width:26.80px;height:25.40px;background:#F89406;border-radius:13px"></div><svg style="left:1809.30px;top:930.00px;" width="5.40" height="11.00" viewBox="0 0 5.4 11"><path d="M3.200 0 H5.400 V11 H3.300 V2.700 L1 4.600 L0 3.300 Z" fill="#fff"/></svg><svg style="left:1916.00px;top:924.10px;" width="22.40" height="17.20" viewBox="0 0 22.4 17.2"><rect x="0" y="0.3" width="3" height="2.800" fill="#4F99D3"/><rect x="5" y="0.3" width="17.400" height="2.800" fill="#4F99D3"/><rect x="0" y="4.9" width="3" height="2.800" fill="#4F99D3"/><rect x="5" y="4.9" width="17.400" height="2.800" fill="#4F99D3"/><rect x="0" y="9.5" width="3" height="2.800" fill="#4F99D3"/><rect x="5" y="9.5" width="17.400" height="2.800" fill="#4F99D3"/><rect x="0" y="14.1" width="3" height="2.800" fill="#4F99D3"/><rect x="5" y="14.1" width="17.400" height="2.800" fill="#4F99D3"/></svg><svg style="left:1950.00px;top:924.10px;" width="17.20" height="17.20" viewBox="0 0 17.2 17.2"><path d="M6.300 0 H10.900 V6.300 H17.200 V10.900 H10.900 V17.200 H6.300 V10.900 H0 V6.300 H6.300 Z" fill="#87B87F"/></svg><div style="left:269.00px;top:961.92px;width:1753.00px;height:50.02px;background:#F8F9F9;border-top:1px solid #E1E1E1"></div><span class="t" style="left:280.70px;top:977.00px;font-size:17.06px;line-height:17.06px;color:#393939;letter-spacing:0.000px;">7</span><span class="t" style="left:366.30px;top:977.00px;font-size:17.06px;line-height:17.06px;color:#393939;letter-spacing:0.295px;">kundan stones</span><span class="t" style="left:571.70px;top:977.00px;font-size:17.06px;line-height:17.06px;color:#393939;letter-spacing:0.190px;">colour gloss kundhans</span><span class="t" style="left:1050.90px;top:977.00px;font-size:17.06px;line-height:17.06px;color:#393939;letter-spacing:0.268px;">4mm round glass kundans</span><div style="left:1529.80px;top:973.72px;width:66.00px;height:25.40px;background:#3A87AD"></div><span class="t" style="left:1539.60px;top:978.00px;font-size:15.74px;line-height:15.74px;color:#FFFFFF;letter-spacing:-0.234px;">Grams</span><div style="left:1799.10px;top:973.52px;width:26.80px;height:25.40px;background:#F89406;border-radius:13px"></div><svg style="left:1809.30px;top:979.82px;" width="5.40" height="11.00" viewBox="0 0 5.4 11"><path d="M3.200 0 H5.400 V11 H3.300 V2.700 L1 4.600 L0 3.300 Z" fill="#fff"/></svg><svg style="left:1916.00px;top:973.92px;" width="22.40" height="17.20" viewBox="0 0 22.4 17.2"><rect x="0" y="0.3" width="3" height="2.800" fill="#4F99D3"/><rect x="5" y="0.3" width="17.400" height="2.800" fill="#4F99D3"/><rect x="0" y="4.9" width="3" height="2.800" fill="#4F99D3"/><rect x="5" y="4.9" width="17.400" height="2.800" fill="#4F99D3"/><rect x="0" y="9.5" width="3" height="2.800" fill="#4F99D3"/><rect x="5" y="9.5" width="17.400" height="2.800" fill="#4F99D3"/><rect x="0" y="14.1" width="3" height="2.800" fill="#4F99D3"/><rect x="5" y="14.1" width="17.400" height="2.800" fill="#4F99D3"/></svg><svg style="left:1950.00px;top:973.92px;" width="17.20" height="17.20" viewBox="0 0 17.2 17.2"><path d="M6.300 0 H10.900 V6.300 H17.200 V10.900 H10.900 V17.200 H6.300 V10.900 H0 V6.300 H6.300 Z" fill="#87B87F"/></svg><div style="left:269.00px;top:1011.74px;width:1753.00px;height:50.02px;background:#FFFFFF;border-top:1px solid #E1E1E1"></div><span class="t" style="left:280.70px;top:1026.00px;font-size:17.06px;line-height:17.06px;color:#393939;letter-spacing:0.000px;">8</span><span class="t" style="left:366.30px;top:1026.00px;font-size:17.06px;line-height:17.06px;color:#393939;letter-spacing:0.295px;">kundan stones</span><span class="t" style="left:571.70px;top:1026.00px;font-size:17.06px;line-height:17.06px;color:#393939;letter-spacing:0.190px;">colour gloss kundhans</span><span class="t" style="left:1050.90px;top:1026.00px;font-size:17.06px;line-height:17.06px;color:#393939;letter-spacing:0.179px;">6k droup glossy kundans</span><div style="left:1529.80px;top:1023.54px;width:66.00px;height:25.40px;background:#3A87AD"></div><span class="t" style="left:1539.60px;top:1028.00px;font-size:15.74px;line-height:15.74px;color:#FFFFFF;letter-spacing:-0.234px;">Grams</span><div style="left:1799.10px;top:1023.34px;width:26.80px;height:25.40px;background:#F89406;border-radius:13px"></div><svg style="left:1809.30px;top:1029.64px;" width="5.40" height="11.00" viewBox="0 0 5.4 11"><path d="M3.200 0 H5.400 V11 H3.300 V2.700 L1 4.600 L0 3.300 Z" fill="#fff"/></svg><svg style="left:1916.00px;top:1023.74px;" width="22.40" height="17.20" viewBox="0 0 22.4 17.2"><rect x="0" y="0.3" width="3" height="2.800" fill="#4F99D3"/><rect x="5" y="0.3" width="17.400" height="2.800" fill="#4F99D3"/><rect x="0" y="4.9" width="3" height="2.800" fill="#4F99D3"/><rect x="5" y="4.9" width="17.400" height="2.800" fill="#4F99D3"/><rect x="0" y="9.5" width="3" height="2.800" fill="#4F99D3"/><rect x="5" y="9.5" width="17.400" height="2.800" fill="#4F99D3"/><rect x="0" y="14.1" width="3" height="2.800" fill="#4F99D3"/><rect x="5" y="14.1" width="17.400" height="2.800" fill="#4F99D3"/></svg><svg style="left:1950.00px;top:1023.74px;" width="17.20" height="17.20" viewBox="0 0 17.2 17.2"><path d="M6.300 0 H10.900 V6.300 H17.200 V10.900 H10.900 V17.200 H6.300 V10.900 H0 V6.300 H6.300 Z" fill="#87B87F"/></svg><div style="left:269.00px;top:1061.56px;width:1753.00px;height:50.02px;background:#F8F9F9;border-top:1px solid #E1E1E1"></div><span class="t" style="left:280.70px;top:1076.00px;font-size:17.06px;line-height:17.06px;color:#393939;letter-spacing:0.000px;">9</span><span class="t" style="left:366.30px;top:1076.00px;font-size:17.06px;line-height:17.06px;color:#393939;letter-spacing:0.295px;">kundan stones</span><span class="t" style="left:571.70px;top:1076.00px;font-size:17.06px;line-height:17.06px;color:#393939;letter-spacing:0.190px;">colour gloss kundhans</span><span class="t" style="left:1050.90px;top:1076.00px;font-size:17.06px;line-height:17.06px;color:#393939;letter-spacing:-0.238px;">6k Eye shape</span><span class="t" style="left:1156.00px;top:1076.00px;font-size:17.06px;line-height:17.06px;color:#393939;letter-spacing:0.135px;">gloss kundhans</span><div style="left:1529.80px;top:1073.36px;width:66.00px;height:25.40px;background:#3A87AD"></div><span class="t" style="left:1539.60px;top:1078.00px;font-size:15.74px;line-height:15.74px;color:#FFFFFF;letter-spacing:-0.234px;">Grams</span><div style="left:1799.10px;top:1073.16px;width:26.80px;height:25.40px;background:#F89406;border-radius:13px"></div><svg style="left:1809.30px;top:1079.46px;" width="5.40" height="11.00" viewBox="0 0 5.4 11"><path d="M3.200 0 H5.400 V11 H3.300 V2.700 L1 4.600 L0 3.300 Z" fill="#fff"/></svg><svg style="left:1916.00px;top:1073.56px;" width="22.40" height="17.20" viewBox="0 0 22.4 17.2"><rect x="0" y="0.3" width="3" height="2.800" fill="#4F99D3"/><rect x="5" y="0.3" width="17.400" height="2.800" fill="#4F99D3"/><rect x="0" y="4.9" width="3" height="2.800" fill="#4F99D3"/><rect x="5" y="4.9" width="17.400" height="2.800" fill="#4F99D3"/><rect x="0" y="9.5" width="3" height="2.800" fill="#4F99D3"/><rect x="5" y="9.5" width="17.400" height="2.800" fill="#4F99D3"/><rect x="0" y="14.1" width="3" height="2.800" fill="#4F99D3"/><rect x="5" y="14.1" width="17.400" height="2.800" fill="#4F99D3"/></svg><svg style="left:1950.00px;top:1073.56px;" width="17.20" height="17.20" viewBox="0 0 17.2 17.2"><path d="M6.300 0 H10.900 V6.300 H17.200 V10.900 H10.900 V17.200 H6.300 V10.900 H0 V6.300 H6.300 Z" fill="#87B87F"/></svg><div style="left:269.00px;top:1111.38px;width:1753.00px;height:50.02px;background:#FFFFFF;border-top:1px solid #E1E1E1"></div><span class="t" style="left:279.70px;top:1126.00px;font-size:17.06px;line-height:17.06px;color:#393939;letter-spacing:0.119px;">10</span><span class="t" style="left:366.30px;top:1126.00px;font-size:17.06px;line-height:17.06px;color:#393939;letter-spacing:0.295px;">kundan stones</span><span class="t" style="left:571.70px;top:1126.00px;font-size:17.06px;line-height:17.06px;color:#393939;letter-spacing:0.190px;">colour gloss kundhans</span><span class="t" style="left:1050.90px;top:1126.00px;font-size:17.06px;line-height:17.06px;color:#393939;letter-spacing:-0.238px;">8k Eye shape</span><span class="t" style="left:1156.00px;top:1126.00px;font-size:17.06px;line-height:17.06px;color:#393939;letter-spacing:0.135px;">gloss kundhans</span><div style="left:1529.80px;top:1123.18px;width:66.00px;height:25.40px;background:#3A87AD"></div><span class="t" style="left:1539.60px;top:1127.00px;font-size:15.74px;line-height:15.74px;color:#FFFFFF;letter-spacing:-0.234px;">Grams</span><div style="left:1799.10px;top:1122.98px;width:26.80px;height:25.40px;background:#F89406;border-radius:13px"></div><svg style="left:1809.30px;top:1129.28px;" width="5.40" height="11.00" viewBox="0 0 5.4 11"><path d="M3.200 0 H5.400 V11 H3.300 V2.700 L1 4.600 L0 3.300 Z" fill="#fff"/></svg><svg style="left:1916.00px;top:1123.38px;" width="22.40" height="17.20" viewBox="0 0 22.4 17.2"><rect x="0" y="0.3" width="3" height="2.800" fill="#4F99D3"/><rect x="5" y="0.3" width="17.400" height="2.800" fill="#4F99D3"/><rect x="0" y="4.9" width="3" height="2.800" fill="#4F99D3"/><rect x="5" y="4.9" width="17.400" height="2.800" fill="#4F99D3"/><rect x="0" y="9.5" width="3" height="2.800" fill="#4F99D3"/><rect x="5" y="9.5" width="17.400" height="2.800" fill="#4F99D3"/><rect x="0" y="14.1" width="3" height="2.800" fill="#4F99D3"/><rect x="5" y="14.1" width="17.400" height="2.800" fill="#4F99D3"/></svg><svg style="left:1950.00px;top:1123.38px;" width="17.20" height="17.20" viewBox="0 0 17.2 17.2"><path d="M6.300 0 H10.900 V6.300 H17.200 V10.900 H10.900 V17.200 H6.300 V10.900 H0 V6.300 H6.300 Z" fill="#87B87F"/></svg><div style="left:268.90px;top:617.20px;width:1.10px;height:544.50px;background:#E1E1E1"></div><div style="left:355.40px;top:617.20px;width:1.10px;height:544.50px;background:#E1E1E1"></div><div style="left:560.10px;top:617.20px;width:1.10px;height:544.50px;background:#E1E1E1"></div><div style="left:1039.50px;top:617.20px;width:1.10px;height:544.50px;background:#E1E1E1"></div><div style="left:1518.90px;top:617.20px;width:1.10px;height:544.50px;background:#E1E1E1"></div><div style="left:1721.90px;top:617.20px;width:1.10px;height:544.50px;background:#E1E1E1"></div><div style="left:1900.90px;top:617.20px;width:1.10px;height:544.50px;background:#E1E1E1"></div><div style="left:2021.10px;top:617.20px;width:1.10px;height:544.50px;background:#E1E1E1"></div><div style="left:269.00px;top:1161.20px;width:1753.00px;height:79.60px;background:#EEF1F8;border-top:1px solid #E1E1E1;border-bottom:1px solid #DDDDDD"></div><span class="t" style="left:284.20px;top:1183.00px;font-size:17.06px;line-height:17.06px;color:#393939;letter-spacing:0.738px;">Showing 1 to</span><span class="t" style="left:396.70px;top:1183.00px;font-size:17.06px;line-height:17.06px;color:#393939;letter-spacing:0.610px;">10 of 37</span><span class="t" style="left:468.50px;top:1183.00px;font-size:17.06px;line-height:17.06px;color:#393939;letter-spacing:0.993px;">entries</span><div style="left:1666.20px;top:1177.60px;width:97.80px;height:40.20px;background:#F9F9F9;border:1px solid #E0E8EB"></div><span class="t" style="left:1681.80px;top:1190.00px;font-size:17.06px;line-height:17.06px;color:#777777;letter-spacing:0.057px;">Previous</span><div style="left:1763.00px;top:1177.60px;width:42.80px;height:40.20px;background:#6FAED9;border:1px solid #6FAED9"></div><span class="t" style="left:1778.60px;top:1190.00px;font-size:17.06px;line-height:17.06px;color:#FFFFFF;letter-spacing:0.000px;">1</span><div style="left:1804.80px;top:1177.60px;width:40.60px;height:40.20px;background:#FAFAFA;border:1px solid #E0E8EB"></div><span class="t" style="left:1820.30px;top:1190.00px;font-size:17.06px;line-height:17.06px;color:#2283C5;letter-spacing:0.000px;">2</span><div style="left:1844.40px;top:1177.60px;width:41.10px;height:40.20px;background:#FAFAFA;border:1px solid #E0E8EB"></div><span class="t" style="left:1860.15px;top:1190.00px;font-size:17.06px;line-height:17.06px;color:#2283C5;letter-spacing:0.000px;">3</span><div style="left:1884.50px;top:1177.60px;width:42.00px;height:40.20px;background:#FAFAFA;border:1px solid #E0E8EB"></div><span class="t" style="left:1900.70px;top:1190.00px;font-size:17.06px;line-height:17.06px;color:#2283C5;letter-spacing:0.000px;">4</span><div style="left:1925.50px;top:1177.60px;width:68.50px;height:40.20px;background:#FAFAFA;border:1px solid #E0E8EB"></div><span class="t" style="left:1940.50px;top:1190.00px;font-size:17.06px;line-height:17.06px;color:#2283C5;letter-spacing:0.328px;">Next</span></div></div>
<div id="browser-chrome" style="left:0;top:0;width:2048px;height:174px;"><div style="left:0.00px;top:0.00px;width:2048.00px;height:80.00px;background:#311A21"></div><div style="left:0.00px;top:58.00px;width:2048.00px;height:115.20px;background:#4E3137;border-radius:12px 12px 0 0"></div><div style="left:18.50px;top:19.40px;width:19.80px;height:19.80px;background:#F4465A;border-radius:50%"></div><div style="left:51.10px;top:19.40px;width:19.80px;height:19.80px;background:#5C484D;border-radius:50%"></div><div style="left:83.80px;top:19.40px;width:19.80px;height:19.80px;background:#2BB84C;border-radius:50%"></div><div style="left:1748.20px;top:10.00px;width:126.40px;height:49.00px;background:#4E3137;border-radius:13px 13px 0 0"></div><div style="left:1735.20px;top:45.00px;width:13.00px;height:13.00px;background:radial-gradient(circle at 0 0,rgba(0,0,0,0) 12.600px,#4E3137 13.300px)"></div><div style="left:1874.60px;top:45.00px;width:13.00px;height:13.00px;background:radial-gradient(circle at 100% 0,rgba(0,0,0,0) 12.600px,#4E3137 13.300px)"></div><div style="left:253.70px;top:18.60px;width:2.20px;height:22.60px;background:#5B4046;border-radius:1px"></div><div style="left:390.20px;top:18.60px;width:2.20px;height:22.60px;background:#5B4046;border-radius:1px"></div><div style="left:526.80px;top:18.60px;width:2.20px;height:22.60px;background:#5B4046;border-radius:1px"></div><div style="left:661.80px;top:18.60px;width:2.20px;height:22.60px;background:#5B4046;border-radius:1px"></div><div style="left:796.90px;top:18.60px;width:2.20px;height:22.60px;background:#5B4046;border-radius:1px"></div><div style="left:932.00px;top:18.60px;width:2.20px;height:22.60px;background:#5B4046;border-radius:1px"></div><div style="left:1067.40px;top:18.60px;width:2.20px;height:22.60px;background:#5B4046;border-radius:1px"></div><div style="left:1202.30px;top:18.60px;width:2.20px;height:22.60px;background:#5B4046;border-radius:1px"></div><div style="left:1337.50px;top:18.60px;width:2.20px;height:22.60px;background:#5B4046;border-radius:1px"></div><div style="left:1472.60px;top:18.60px;width:2.20px;height:22.60px;background:#5B4046;border-radius:1px"></div><div style="left:1607.70px;top:18.60px;width:2.20px;height:22.60px;background:#5B4046;border-radius:1px"></div><svg style="left:132.10px;top:17.10px;" width="25.60" height="25.60" viewBox="0 0 24 24"><path d="M3 21.200 l1.500-4.900 A9.100 9.100 0 1 1 7.800 19.700 z" fill="none" stroke="#28C765" stroke-width="1.500" stroke-linejoin="round"/><path d="M8.900 7.600 c.4-.4.9-.3 1.100.1 l.8 1.600 c.2.4.1.700-.2 1 l-.6.6 c.7 1.300 1.700 2.300 3 3 l.7-.7 c.3-.3.6-.3 1-.1 l1.500.8 c.4.2.5.700.1 1.100 -.8.9-1.900 1.200-3.100.700 -2.500-1-4.500-3-5.400-5.400 -.4-1.200 0-2 1.100-2.700z" fill="#28C765"/></svg><div style="left:270.00px;top:18.20px;width:23.40px;height:23.40px;background:#211a1e;border-radius:3px"></div><svg style="left:272.70px;top:20.80px;" width="18.00" height="18.00" viewBox="0 0 18 18"><path d="M10.6 1.2 L2.4 10.4 H8.4 V16.8 L15.9 7.6 H10.6 Z" fill="#37C878"/></svg><svg style="left:407.50px;top:18.80px;" width="22.00" height="22.00" viewBox="0 0 22 22"><rect x="13.6" y="1" width="6.2" height="20" rx="3.1" fill="#F9AB00"/><rect x="6.6" y="8.4" width="6.2" height="12.6" rx="3.1" fill="#E8871A"/><circle cx="3.7" cy="17.9" r="3.1" fill="#E8871A"/></svg><svg style="left:542.40px;top:18.80px;" width="24.00" height="22.00" viewBox="0 0 24 22"><defs><linearGradient id="pg0" x1="0" y1="0" x2="0" y2="1"><stop offset="0" stop-color="#9AD4F7"/><stop offset=".5" stop-color="#3D97E0"/><stop offset="1" stop-color="#1668BD"/></linearGradient></defs><path d="M12 1 L23.300 20.400 Q23.600 21 22.900 21 H1.1 Q.4 21 .7 20.400 Z" fill="url(#pg0)"/><path d="M12 1 L16.5 8.7 L9.5 12.400 L5.600 12 Z" fill="#B5E0FA" opacity=".55"/></svg><svg style="left:677.80px;top:18.80px;" width="24.00" height="22.00" viewBox="0 0 24 22"><defs><linearGradient id="pg1" x1="0" y1="0" x2="0" y2="1"><stop offset="0" stop-color="#9AD4F7"/><stop offset=".5" stop-color="#3D97E0"/><stop offset="1" stop-color="#1668BD"/></linearGradient></defs><path d="M12 1 L23.300 20.400 Q23.600 21 22.900 21 H1.1 Q.4 21 .7 20.400 Z" fill="url(#pg1)"/><path d="M12 1 L16.5 8.7 L9.5 12.400 L5.600 12 Z" fill="#B5E0FA" opacity=".55"/></svg><div style="left:812.90px;top:18.10px;width:23.40px;height:23.40px;background:#1D8FE8;"></div><svg style="left:816.60px;top:22.80px;" width="16.00" height="14.00" viewBox="0 0 16 14"><path d="M2 1.5 h12 v8 h-6.500 l-2.500 2.800 v-2.800 h-3 z" fill="#fff"/></svg><svg style="left:847.20px;top:21.30px;" width="18.40" height="16.60" viewBox="0 0 20 18"><path d="M10 1.2 c4.800 0 8.600 3 8.600 6.800 s-3.800 6.800-8.600 6.800 c-1 0-2-.1-2.900-.4 l-4 2.400 1.200-3.700 c-1.800-1.300-2.900-3.100-2.900-5.100 0-3.800 3.800-6.800 8.600-6.800z" fill="#f4f4f4"/><circle cx="6.300" cy="8" r="1.150" fill="#777"/><circle cx="10" cy="8" r="1.150" fill="#777"/><circle cx="13.700" cy="8" r="1.150" fill="#777"/></svg><svg style="left:947.90px;top:17.80px;" width="24.00" height="24.00" viewBox="0 0 24 24"><path d="M20.600 5.800 A10.900 10.900 0 1 0 20.600 18.200" fill="none" stroke="#1E8FF0" stroke-width="1.500"/><circle cx="11.700" cy="12" r="8.500" fill="#1E8FF0"/><path d="M17.600 9.700 L21.800 12 L17.600 14.300 Z" fill="#311A21"/></svg><svg style="left:1083.80px;top:24.70px;" width="22.60" height="10.60" viewBox="0 0 26 14"><path d="M3 13 c-1.900 0-3-1.200-3-2.700 0-1.600 1.300-2.800 3-2.800 .2-2.300 2-3.700 4.100-3.500 C8.300 1.700 10.500.3 13 .3 c3.500 0 6.200 2.500 6.500 5.900 l1.300 0 L19 13 Z" fill="#F6821F"/><path d="M20.500 6.200 c2.900 0 5.100 2 5.300 4.800 .1.700 0 1.400-.2 2 H19 l1.100-4.200z" fill="#FBAD41"/><rect x="2" y="12.200" width="23.500" height="1.300" fill="#F6821F"/></svg><svg style="left:1218.40px;top:17.80px;" width="24.00" height="24.00" viewBox="0 0 24 24"><defs><linearGradient id="gm" x1="0" y1="0" x2="1" y2="1"><stop offset="0" stop-color="#EA4335"/><stop offset=".35" stop-color="#FBBC04"/><stop offset=".55" stop-color="#34A853"/><stop offset=".8" stop-color="#4285F4"/></linearGradient><linearGradient id="gm2" x1="0" y1="1" x2="1" y2="0"><stop offset="0" stop-color="#FBBC04"/><stop offset=".4" stop-color="#EA4335"/><stop offset=".7" stop-color="#4285F4"/><stop offset="1" stop-color="#4285F4"/></linearGradient></defs><path d="M12 .8 C12.600 7.600 16.400 11.400 23.200 12 C16.400 12.600 12.600 16.400 12 23.200 C11.400 16.400 7.600 12.600 .8 12 C7.600 11.400 11.400 7.600 12 .8 Z" fill="url(#gm2)"/><path d="M12 12 L23.200 12 C16.400 12.600 12.600 16.400 12 23.200 Z" fill="#34A853"/><path d="M12 12 L12 23.200 C11.400 16.400 7.600 12.600 .8 12 Z" fill="#FBBC04"/><path d="M12 12 L.8 12 C7.600 11.400 11.400 7.600 12 .8 Z" fill="#EA4335"/><path d="M12 12 L12 .8 C12.600 7.600 16.400 11.400 23.200 12 Z" fill="#4285F4"/></svg><div style="left:1353.70px;top:18.10px;width:23.30px;height:23.40px;background:#FF4F00;"></div><div style="left:1489.50px;top:18.30px;width:22.60px;height:23.00px;background:#1B1826;border-radius:5px"></div><div style="left:1491.60px;top:20.60px;width:7.80px;height:18.40px;background:#F5B23E;border-radius:3px 1px 1px 3px"></div><div style="left:1500.60px;top:20.60px;width:9.40px;height:7.60px;background:#8E7FE8;border-radius:1px 3px 1px 1px"></div><div style="left:1500.60px;top:29.40px;width:9.40px;height:9.60px;background:#3DA5F4;border-radius:1px 1px 3px 1px"></div><div style="left:1623.90px;top:18.10px;width:23.40px;height:23.40px;background:#fff;"></div><svg style="left:1629.10px;top:21.30px;" width="13.00" height="13.00" viewBox="0 0 13 13"><circle cx="6.500" cy="6.500" r="4.300" fill="none" stroke="#111" stroke-width="2.700" stroke-dasharray="22 5" transform="rotate(35 6.500 6.500)"/><circle cx="6.500" cy="6.500" r="1.500" fill="#111"/></svg><div style="left:1630.00px;top:36.40px;width:11.40px;height:1.50px;background:#444;"></div><svg style="left:1757.60px;top:17.60px;" width="24.40" height="24.40" viewBox="0 0 24 24"><circle cx="12" cy="12" r="10" fill="#A59C9F"/><path fill="#4E3137" d="M10.2 3.6c1.5-.5 3.6-.4 5 .3l.3 1.7-1.7 1.2-2.2-.2-.9 1.5-2.3.4-1 1.6 1.6 1.2 2.4-.3 1.6 1.3-.2 2.3 1.4 1.5-.6 2.7-1.9 1.5-1.3-2.5.2-2.2-2.2-1.5-2.6-.6-1.3-1.9c.4-3.3 2.5-6.1 5.7-7z"/><path fill="#4E3137" d="M15.2 11.2l2.4-1.2 2.2.8.9 1.9-1 2.6-2.1 1.3-1.7-1 .2-2z"/></svg><div style="left:168.90px;top:18.00px;width:35.50px;height:30.00px;overflow:hidden;"><span class="t" style="left:0;top:4.00px;font-size:17px;line-height:17px;color:#EBDFE2;">WhatsApp</span><div style="right:0;top:0;width:15px;height:30px;background:linear-gradient(to right,rgba(0,0,0,0),#311A21 95%)"></div></div><div style="left:305.00px;top:18.00px;width:35.50px;height:30.00px;overflow:hidden;"><span class="t" style="left:0;top:4.00px;font-size:17px;line-height:17px;color:#EBDFE2;">Core Web</span><div style="right:0;top:0;width:15px;height:30px;background:linear-gradient(to right,rgba(0,0,0,0),#311A21 95%)"></div></div><div style="left:442.00px;top:18.00px;width:35.50px;height:30.00px;overflow:hidden;"><span class="t" style="left:0;top:4.00px;font-size:17px;line-height:17px;color:#EBDFE2;">Analytics</span><div style="right:0;top:0;width:15px;height:30px;background:linear-gradient(to right,rgba(0,0,0,0),#311A21 95%)"></div></div><div style="left:578.20px;top:18.00px;width:35.50px;height:30.00px;overflow:hidden;"><span class="t" style="left:0;top:4.00px;font-size:17px;line-height:17px;color:#EBDFE2;">Microsoft</span><div style="right:0;top:0;width:15px;height:30px;background:linear-gradient(to right,rgba(0,0,0,0),#311A21 95%)"></div></div><div style="left:713.20px;top:18.00px;width:35.50px;height:30.00px;overflow:hidden;"><span class="t" style="left:0;top:4.00px;font-size:17px;line-height:17px;color:#EBDFE2;">Core Web</span><div style="right:0;top:0;width:15px;height:30px;background:linear-gradient(to right,rgba(0,0,0,0),#311A21 95%)"></div></div><div style="left:983.40px;top:18.00px;width:35.50px;height:30.00px;overflow:hidden;"><span class="t" style="left:0;top:4.00px;font-size:17px;line-height:17px;color:#EBDFE2;">Everhour</span><div style="right:0;top:0;width:15px;height:30px;background:linear-gradient(to right,rgba(0,0,0,0),#311A21 95%)"></div></div><div style="left:1118.50px;top:18.00px;width:35.50px;height:30.00px;overflow:hidden;"><span class="t" style="left:0;top:4.00px;font-size:17px;line-height:17px;color:#EBDFE2;">Cloudflare</span><div style="right:0;top:0;width:15px;height:30px;background:linear-gradient(to right,rgba(0,0,0,0),#311A21 95%)"></div></div><div style="left:1253.80px;top:18.00px;width:35.50px;height:30.00px;overflow:hidden;"><span class="t" style="left:0;top:4.00px;font-size:17px;line-height:17px;color:#EBDFE2;">Google</span><div style="right:0;top:0;width:15px;height:30px;background:linear-gradient(to right,rgba(0,0,0,0),#311A21 95%)"></div></div><div style="left:1388.90px;top:18.00px;width:35.50px;height:30.00px;overflow:hidden;"><span class="t" style="left:0;top:4.00px;font-size:17px;line-height:17px;color:#EBDFE2;">Plans</span><div style="right:0;top:0;width:15px;height:30px;background:linear-gradient(to right,rgba(0,0,0,0),#311A21 95%)"></div></div><div style="left:1524.30px;top:18.00px;width:35.50px;height:30.00px;overflow:hidden;"><span class="t" style="left:0;top:4.00px;font-size:17px;line-height:17px;color:#EBDFE2;">Bento</span><div style="right:0;top:0;width:15px;height:30px;background:linear-gradient(to right,rgba(0,0,0,0),#311A21 95%)"></div></div><div style="left:1659.30px;top:18.00px;width:35.50px;height:30.00px;overflow:hidden;"><span class="t" style="left:0;top:4.00px;font-size:17px;line-height:17px;color:#EBDFE2;">TheSilk</span><div style="right:0;top:0;width:15px;height:30px;background:linear-gradient(to right,rgba(0,0,0,0),#311A21 95%)"></div></div><span class="t" style="left:868.50px;top:22.00px;font-size:17px;line-height:17px;color:#EBDFE2;letter-spacing:0.000px;">1</span><div style="left:1793.20px;top:18.00px;width:35.50px;height:30.00px;overflow:hidden;"><span class="t" style="left:0;top:4.00px;font-size:17px;line-height:17px;color:#F3E9EB;">thesilkart</span><div style="right:0;top:0;width:15px;height:30px;background:linear-gradient(to right,rgba(0,0,0,0),#4E3137 95%)"></div></div><svg style="left:221.50px;top:23.90px;" width="12.00" height="12.00" viewBox="0 0 12 12"><path d="M1.2 1.2 L10.8 10.8 M10.8 1.2 L1.2 10.8" stroke="#E6D8DB" stroke-width="2" fill="none"/></svg><svg style="left:358.00px;top:23.90px;" width="12.00" height="12.00" viewBox="0 0 12 12"><path d="M1.2 1.2 L10.8 10.8 M10.8 1.2 L1.2 10.8" stroke="#E6D8DB" stroke-width="2" fill="none"/></svg><svg style="left:494.50px;top:23.90px;" width="12.00" height="12.00" viewBox="0 0 12 12"><path d="M1.2 1.2 L10.8 10.8 M10.8 1.2 L1.2 10.8" stroke="#E6D8DB" stroke-width="2" fill="none"/></svg><svg style="left:629.60px;top:23.90px;" width="12.00" height="12.00" viewBox="0 0 12 12"><path d="M1.2 1.2 L10.8 10.8 M10.8 1.2 L1.2 10.8" stroke="#E6D8DB" stroke-width="2" fill="none"/></svg><svg style="left:764.70px;top:23.90px;" width="12.00" height="12.00" viewBox="0 0 12 12"><path d="M1.2 1.2 L10.8 10.8 M10.8 1.2 L1.2 10.8" stroke="#E6D8DB" stroke-width="2" fill="none"/></svg><svg style="left:900.00px;top:23.90px;" width="12.00" height="12.00" viewBox="0 0 12 12"><path d="M1.2 1.2 L10.8 10.8 M10.8 1.2 L1.2 10.8" stroke="#E6D8DB" stroke-width="2" fill="none"/></svg><svg style="left:1034.80px;top:23.90px;" width="12.00" height="12.00" viewBox="0 0 12 12"><path d="M1.2 1.2 L10.8 10.8 M10.8 1.2 L1.2 10.8" stroke="#E6D8DB" stroke-width="2" fill="none"/></svg><svg style="left:1170.20px;top:23.90px;" width="12.00" height="12.00" viewBox="0 0 12 12"><path d="M1.2 1.2 L10.8 10.8 M10.8 1.2 L1.2 10.8" stroke="#E6D8DB" stroke-width="2" fill="none"/></svg><svg style="left:1305.30px;top:23.90px;" width="12.00" height="12.00" viewBox="0 0 12 12"><path d="M1.2 1.2 L10.8 10.8 M10.8 1.2 L1.2 10.8" stroke="#E6D8DB" stroke-width="2" fill="none"/></svg><svg style="left:1440.30px;top:23.90px;" width="12.00" height="12.00" viewBox="0 0 12 12"><path d="M1.2 1.2 L10.8 10.8 M10.8 1.2 L1.2 10.8" stroke="#E6D8DB" stroke-width="2" fill="none"/></svg><svg style="left:1575.40px;top:23.90px;" width="12.00" height="12.00" viewBox="0 0 12 12"><path d="M1.2 1.2 L10.8 10.8 M10.8 1.2 L1.2 10.8" stroke="#E6D8DB" stroke-width="2" fill="none"/></svg><svg style="left:1710.50px;top:23.90px;" width="12.00" height="12.00" viewBox="0 0 12 12"><path d="M1.2 1.2 L10.8 10.8 M10.8 1.2 L1.2 10.8" stroke="#E6D8DB" stroke-width="2" fill="none"/></svg><svg style="left:1845.40px;top:23.90px;" width="12.00" height="12.00" viewBox="0 0 12 12"><path d="M1.2 1.2 L10.8 10.8 M10.8 1.2 L1.2 10.8" stroke="#F3E9EB" stroke-width="2" fill="none"/></svg><svg style="left:1895.00px;top:21.20px;" width="16.00" height="16.00" viewBox="0 0 16 16"><path d="M8 1 V15 M1 8 H15" stroke="#E6D8DB" stroke-width="2.200" fill="none"/></svg><div style="left:1999.60px;top:10.00px;width:40.00px;height:40.00px;background:#4E3137;border-radius:13px"></div><svg style="left:2012.40px;top:25.90px;" width="14.00" height="9.00" viewBox="0 0 14 9"><path d="M1.500 1.500 L7 7 L12.500 1.500" stroke="#E6D8DB" stroke-width="2.200" fill="none"/></svg><svg style="left:21.40px;top:82.00px;" width="20.00" height="18.00" viewBox="0 0 20 18"><path d="M18.600 9 H2.600 M10 1.300 L2.300 9 L10 16.700" stroke="#E6D8DB" stroke-width="2.100" fill="none"/></svg><svg style="left:72.40px;top:82.00px;" width="20.00" height="18.00" viewBox="0 0 20 18"><path d="M1.400 9 H17.400 M10 1.300 L17.700 9 L10 16.700" stroke="#8E787D" stroke-width="2.100" fill="none"/></svg><svg style="left:120.70px;top:78.00px;" width="26.00" height="26.00" viewBox="0 0 24 24"><path fill="#E6D8DB" d="M12 20q-3.350 0-5.675-2.325T4 12q0-3.350 2.325-5.675T12 4q1.725 0 3.300.712T18 6.750V4h2v7h-7V9h4.200q-.8-1.400-2.187-2.200T12 6Q9.500 6 7.750 7.750T6 12q0 2.500 1.750 4.250T12 18q1.925 0 3.475-1.100T17.650 14h2.100q-.7 2.650-2.850 4.325T12 20Z"/></svg><div style="left:170.60px;top:67.00px;width:1527.40px;height:48.00px;background:#371D25;border-radius:24px"></div><div style="left:178.10px;top:74.00px;width:34.00px;height:34.00px;background:#4E3137;border-radius:50%"></div><svg style="left:185.80px;top:83.00px;" width="18.00" height="16.00" viewBox="0 0 18 16"><circle cx="3.900" cy="3.200" r="2.400" fill="none" stroke="#E6D8DB" stroke-width="1.900"/><path d="M9.300 3.200 H17" stroke="#E6D8DB" stroke-width="2"/><circle cx="14.100" cy="12.800" r="2.400" fill="none" stroke="#E6D8DB" stroke-width="1.900"/><path d="M1 12.800 H8.700" stroke="#E6D8DB" stroke-width="2"/></svg><span class="t" style="left:223.60px;top:82.00px;font-size:19.3px;line-height:19.3px;color:#F3EAEC;letter-spacing:0.971px;">thesilkart.com/admin/Variants</span><svg style="left:1606.50px;top:80.20px;" width="22.00" height="22.00" viewBox="0 0 22 22"><circle cx="9" cy="9" r="6.400" fill="none" stroke="#E6D8DB" stroke-width="2.100"/><path d="M13.800 13.800 L20.200 20.200" stroke="#E6D8DB" stroke-width="2.300"/><path d="M6 9 H12" stroke="#E6D8DB" stroke-width="1.900"/></svg><svg style="left:1651.70px;top:79.10px;" width="24.00" height="23.00" viewBox="0 0 24 23"><path d="M12 2.200 L14.900 8.700 L21.900 9.400 L16.600 14.100 L18.100 21 L12 17.400 L5.900 21 L7.400 14.100 L2.100 9.400 L9.100 8.700 Z" fill="none" stroke="#E6D8DB" stroke-width="2" stroke-linejoin="round"/></svg><div style="left:1724.00px;top:79.80px;width:22.80px;height:22.80px;background:linear-gradient(135deg,#3a3a3a 0,#222 45%,#1a1a1a 100%);border-radius:5px"></div><span class="t" style="left:1727.600px;top:82.600px;font-family:&quot;Liberation Serif&quot;,serif;font-weight:700;font-size:16.500px;line-height:16.500px;color:#fff;letter-spacing:0">M</span><svg style="left:1773.60px;top:78.50px;" width="24.00" height="24.00" viewBox="0 0 24 24"><rect x="2" y="6.500" width="17" height="15.500" rx="3" fill="#8DB7EE"/><path d="M2.600 19.500 L9 11.500 L14.500 17.500 L19 14 V19 a3 3 0 0 1-3 3 H5 a3 3 0 0 1-2.400-2.500z" fill="#C9DFF8"/><path d="M17.500 1.500 V9.500 M14 6.600 L17.500 10 L21 6.600" stroke="#6A7FE0" stroke-width="2.200" fill="none"/></svg><svg style="left:1825.10px;top:78.30px;" width="25.00" height="25.00" viewBox="0 0 25 25"><path d="M7.600 .8 H17.400 L24.200 7.600 V17.400 L17.400 24.200 H7.600 L.8 17.400 V7.600 Z" fill="#EE3A4F"/></svg><span class="t" style="left:1828.200px;top:86.500px;font-weight:700;font-size:10px;line-height:10px;color:#fff;letter-spacing:-.3px">ABP</span><svg style="left:1877.00px;top:76.80px;" width="26.00" height="26.00" viewBox="0 0 24 24"><path fill="#E6D8DB" d="M10.500 4.500c.28 0 .5.22.5.5v2h6v6h2c.28 0 .5.22.5.5s-.22.5-.5.5h-2v6h-2.120c-.68-1.750-2.390-3-4.380-3s-3.700 1.250-4.380 3H4v-2.120c1.750-.68 3-2.390 3-4.380 0-1.990-1.240-3.700-2.990-4.380L4 7h6V5c0-.28.22-.5.5-.5m0-2C9.120 2.500 8 3.620 8 5H4c-1.100 0-1.990.9-1.990 2v3.800h.29c1.490 0 2.700 1.210 2.700 2.700s-1.210 2.700-2.700 2.700H2V20c0 1.100.9 2 2 2h3.800v-.3c0-1.490 1.210-2.700 2.700-2.700s2.700 1.210 2.700 2.700v.3H17c1.100 0 2-.9 2-2v-4c1.380 0 2.500-1.120 2.500-2.500S20.380 11 19 11V7c0-1.100-.9-2-2-2h-4c0-1.380-1.120-2.500-2.500-2.500z"/></svg><div style="left:1926.20px;top:80.00px;width:1.60px;height:22.00px;background:#7A6267"></div><div style="left:1950.80px;top:76.20px;width:29.20px;height:29.20px;border-radius:50%;overflow:hidden;background:linear-gradient(#77737500 0,#77737500 100%),linear-gradient(#6f6b6d 0,#8b8789 48%,#2f2d2e 52%,#2f2d2e 56%,#cfcccd 60%,#bdbabb 100%)"><div style="left:9.500px;top:1.500px;width:11px;height:14px;border-radius:50%;background:radial-gradient(circle at 50% 35%,#f3eaea 0,#d9cccc 60%,#a79c9d 100%)"></div><div style="left:6px;top:13px;width:17px;height:16px;border-radius:45%;background:radial-gradient(circle at 50% 40%,#d8d0d0 0,#a8a2a3 70%,#8a8586 100%)"></div></div><div style="left:2014.65px;top:81.05px;width:3.90px;height:3.90px;background:#E6D8DB;border-radius:50%"></div><div style="left:2014.65px;top:88.85px;width:3.90px;height:3.90px;background:#E6D8DB;border-radius:50%"></div><div style="left:2014.65px;top:96.65px;width:3.90px;height:3.90px;background:#E6D8DB;border-radius:50%"></div><svg style="left:18.20px;top:137.90px;" width="20.00" height="20.00" viewBox="0 0 20 20"><rect x="1.2" y="1.2" width="6.600" height="6.600" fill="none" stroke="#E6D8DB" stroke-width="1.900"/><rect x="1.2" y="12.2" width="6.600" height="6.600" fill="none" stroke="#E6D8DB" stroke-width="1.900"/><rect x="12.2" y="1.2" width="6.600" height="6.600" fill="none" stroke="#E6D8DB" stroke-width="1.900"/><rect x="12.2" y="12.2" width="6.600" height="6.600" fill="none" stroke="#E6D8DB" stroke-width="1.900"/></svg><div style="left:60.40px;top:137.00px;width:1.60px;height:22.00px;background:#7A6267"></div><svg style="left:81.80px;top:135.40px;" width="24.40" height="24.40" viewBox="0 0 24 24"><circle cx="12" cy="12" r="10" fill="#C9C3C5"/><path fill="#4E3137" d="M10.2 3.6c1.5-.5 3.6-.4 5 .3l.3 1.7-1.7 1.2-2.2-.2-.9 1.5-2.3.4-1 1.6 1.6 1.2 2.4-.3 1.6 1.3-.2 2.3 1.4 1.5-.6 2.7-1.9 1.5-1.3-2.5.2-2.2-2.2-1.5-2.6-.6-1.3-1.9c.4-3.3 2.5-6.1 5.7-7z"/><path fill="#4E3137" d="M15.2 11.2l2.4-1.2 2.2.8.9 1.9-1 2.6-2.1 1.3-1.7-1 .2-2z"/></svg><span class="t" style="left:114.30px;top:140.00px;font-size:17.2px;line-height:17.2px;color:#EBDFE2;letter-spacing:0.531px;">Annotations</span><svg style="left:235.10px;top:137.60px;" width="25.00" height="20.00" viewBox="0 0 25 20"><path d="M2 4.2 a2 2 0 0 1 2-2 h5.2 l2.6 2.8 h9.2 a2 2 0 0 1 2 2 v9 a2 2 0 0 1-2 2 h-17 a2 2 0 0 1-2-2 z" fill="none" stroke="#E6D8DB" stroke-width="2" stroke-linejoin="round"/></svg><span class="t" style="left:269.60px;top:140.00px;font-size:17.2px;line-height:17.2px;color:#EBDFE2;letter-spacing:0.369px;">EPADD - info urls</span><svg style="left:431.40px;top:135.40px;" width="24.40" height="24.40" viewBox="0 0 24 24"><circle cx="12" cy="12" r="10" fill="#C9C3C5"/><path fill="#4E3137" d="M10.2 3.6c1.5-.5 3.6-.4 5 .3l.3 1.7-1.7 1.2-2.2-.2-.9 1.5-2.3.4-1 1.6 1.6 1.2 2.4-.3 1.6 1.3-.2 2.3 1.4 1.5-.6 2.7-1.9 1.5-1.3-2.5.2-2.2-2.2-1.5-2.6-.6-1.3-1.9c.4-3.3 2.5-6.1 5.7-7z"/><path fill="#4E3137" d="M15.2 11.2l2.4-1.2 2.2.8.9 1.9-1 2.6-2.1 1.3-1.7-1 .2-2z"/></svg><span class="t" style="left:462.80px;top:140.00px;font-size:17.2px;line-height:17.2px;color:#EBDFE2;letter-spacing:0.431px;">| Baeldung</span><div style="left:572.10px;top:137.00px;width:21.20px;height:21.20px;border-radius:50%;background:#4A90D9;border:2px solid #A9C9EC"></div><svg style="left:575.70px;top:140.60px;" width="14.00" height="14.00" viewBox="0 0 14 14"><path d="M7 1.200 L8.300 7 L12.500 11.800 L7 9.300 L1.500 11.800 L5.700 7 Z" fill="#E8323C"/></svg><span class="t" style="left:604.00px;top:140.00px;font-size:17.2px;line-height:17.2px;color:#EBDFE2;letter-spacing:0.355px;">Java Infinite - Lear...</span><svg style="left:789.50px;top:135.40px;" width="24.40" height="24.40" viewBox="0 0 24 24"><circle cx="12" cy="12" r="10" fill="#C9C3C5"/><path fill="#4E3137" d="M10.2 3.6c1.5-.5 3.6-.4 5 .3l.3 1.7-1.7 1.2-2.2-.2-.9 1.5-2.3.4-1 1.6 1.6 1.2 2.4-.3 1.6 1.3-.2 2.3 1.4 1.5-.6 2.7-1.9 1.5-1.3-2.5.2-2.2-2.2-1.5-2.6-.6-1.3-1.9c.4-3.3 2.5-6.1 5.7-7z"/><path fill="#4E3137" d="M15.2 11.2l2.4-1.2 2.2.8.9 1.9-1 2.6-2.1 1.3-1.7-1 .2-2z"/></svg><span class="t" style="left:822.00px;top:140.00px;font-size:17.2px;line-height:17.2px;color:#EBDFE2;letter-spacing:0.302px;">Cheat Sheet of Ma...</span><svg style="left:1008.80px;top:135.40px;" width="24.40" height="24.40" viewBox="0 0 24 24"><circle cx="12" cy="12" r="10" fill="#C9C3C5"/><path fill="#4E3137" d="M10.2 3.6c1.5-.5 3.6-.4 5 .3l.3 1.7-1.7 1.2-2.2-.2-.9 1.5-2.3.4-1 1.6 1.6 1.2 2.4-.3 1.6 1.3-.2 2.3 1.4 1.5-.6 2.7-1.9 1.5-1.3-2.5.2-2.2-2.2-1.5-2.6-.6-1.3-1.9c.4-3.3 2.5-6.1 5.7-7z"/><path fill="#4E3137" d="M15.2 11.2l2.4-1.2 2.2.8.9 1.9-1 2.6-2.1 1.3-1.7-1 .2-2z"/></svg><span class="t" style="left:1041.70px;top:140.00px;font-size:17.2px;line-height:17.2px;color:#EBDFE2;letter-spacing:0.144px;">JSON Editor Onlin...</span><svg style="left:1230.70px;top:137.60px;" width="25.00" height="20.00" viewBox="0 0 25 20"><path d="M2 4.2 a2 2 0 0 1 2-2 h5.2 l2.6 2.8 h9.2 a2 2 0 0 1 2 2 v9 a2 2 0 0 1-2 2 h-17 a2 2 0 0 1-2-2 z" fill="none" stroke="#E6D8DB" stroke-width="2" stroke-linejoin="round"/></svg><span class="t" style="left:1266.60px;top:140.00px;font-size:17.2px;line-height:17.2px;color:#EBDFE2;letter-spacing:0.247px;">Angular</span><svg style="left:1352.80px;top:137.60px;" width="25.00" height="20.00" viewBox="0 0 25 20"><path d="M2 4.2 a2 2 0 0 1 2-2 h5.2 l2.6 2.8 h9.2 a2 2 0 0 1 2 2 v9 a2 2 0 0 1-2 2 h-17 a2 2 0 0 1-2-2 z" fill="none" stroke="#E6D8DB" stroke-width="2" stroke-linejoin="round"/></svg><span class="t" style="left:1387.60px;top:140.00px;font-size:17.2px;line-height:17.2px;color:#EBDFE2;letter-spacing:0.610px;">node api</span><svg style="left:1482.00px;top:137.60px;" width="25.00" height="20.00" viewBox="0 0 25 20"><path d="M2 4.2 a2 2 0 0 1 2-2 h5.2 l2.6 2.8 h9.2 a2 2 0 0 1 2 2 v9 a2 2 0 0 1-2 2 h-17 a2 2 0 0 1-2-2 z" fill="none" stroke="#E6D8DB" stroke-width="2" stroke-linejoin="round"/></svg><span class="t" style="left:1517.80px;top:140.00px;font-size:17.2px;line-height:17.2px;color:#EBDFE2;letter-spacing:-1.369px;">QA</span><svg style="left:1567.50px;top:137.60px;" width="25.00" height="20.00" viewBox="0 0 25 20"><path d="M2 4.2 a2 2 0 0 1 2-2 h5.2 l2.6 2.8 h9.2 a2 2 0 0 1 2 2 v9 a2 2 0 0 1-2 2 h-17 a2 2 0 0 1-2-2 z" fill="none" stroke="#E6D8DB" stroke-width="2" stroke-linejoin="round"/></svg><span class="t" style="left:1603.20px;top:140.00px;font-size:17.2px;line-height:17.2px;color:#EBDFE2;letter-spacing:-0.594px;">JS</span><svg style="left:1648.50px;top:137.60px;" width="25.00" height="20.00" viewBox="0 0 25 20"><path d="M2 4.2 a2 2 0 0 1 2-2 h5.2 l2.6 2.8 h9.2 a2 2 0 0 1 2 2 v9 a2 2 0 0 1-2 2 h-17 a2 2 0 0 1-2-2 z" fill="none" stroke="#E6D8DB" stroke-width="2" stroke-linejoin="round"/></svg><span class="t" style="left:1683.20px;top:140.00px;font-size:17.2px;line-height:17.2px;color:#EBDFE2;letter-spacing:0.819px;">nestjs</span><svg style="left:1756.50px;top:137.60px;" width="25.00" height="20.00" viewBox="0 0 25 20"><path d="M2 4.2 a2 2 0 0 1 2-2 h5.2 l2.6 2.8 h9.2 a2 2 0 0 1 2 2 v9 a2 2 0 0 1-2 2 h-17 a2 2 0 0 1-2-2 z" fill="none" stroke="#E6D8DB" stroke-width="2" stroke-linejoin="round"/></svg><span class="t" style="left:1792.50px;top:140.00px;font-size:17.2px;line-height:17.2px;color:#EBDFE2;letter-spacing:0.588px;">terraform</span><svg style="left:1988.60px;top:141.30px;" width="16.00" height="13.00" viewBox="0 0 16 13"><path d="M1.500 1.200 L7 6.500 L1.500 11.800 M8.500 1.200 L14 6.500 L8.500 11.800" stroke="#E6D8DB" stroke-width="2" fill="none"/></svg></div>
</body></html>
